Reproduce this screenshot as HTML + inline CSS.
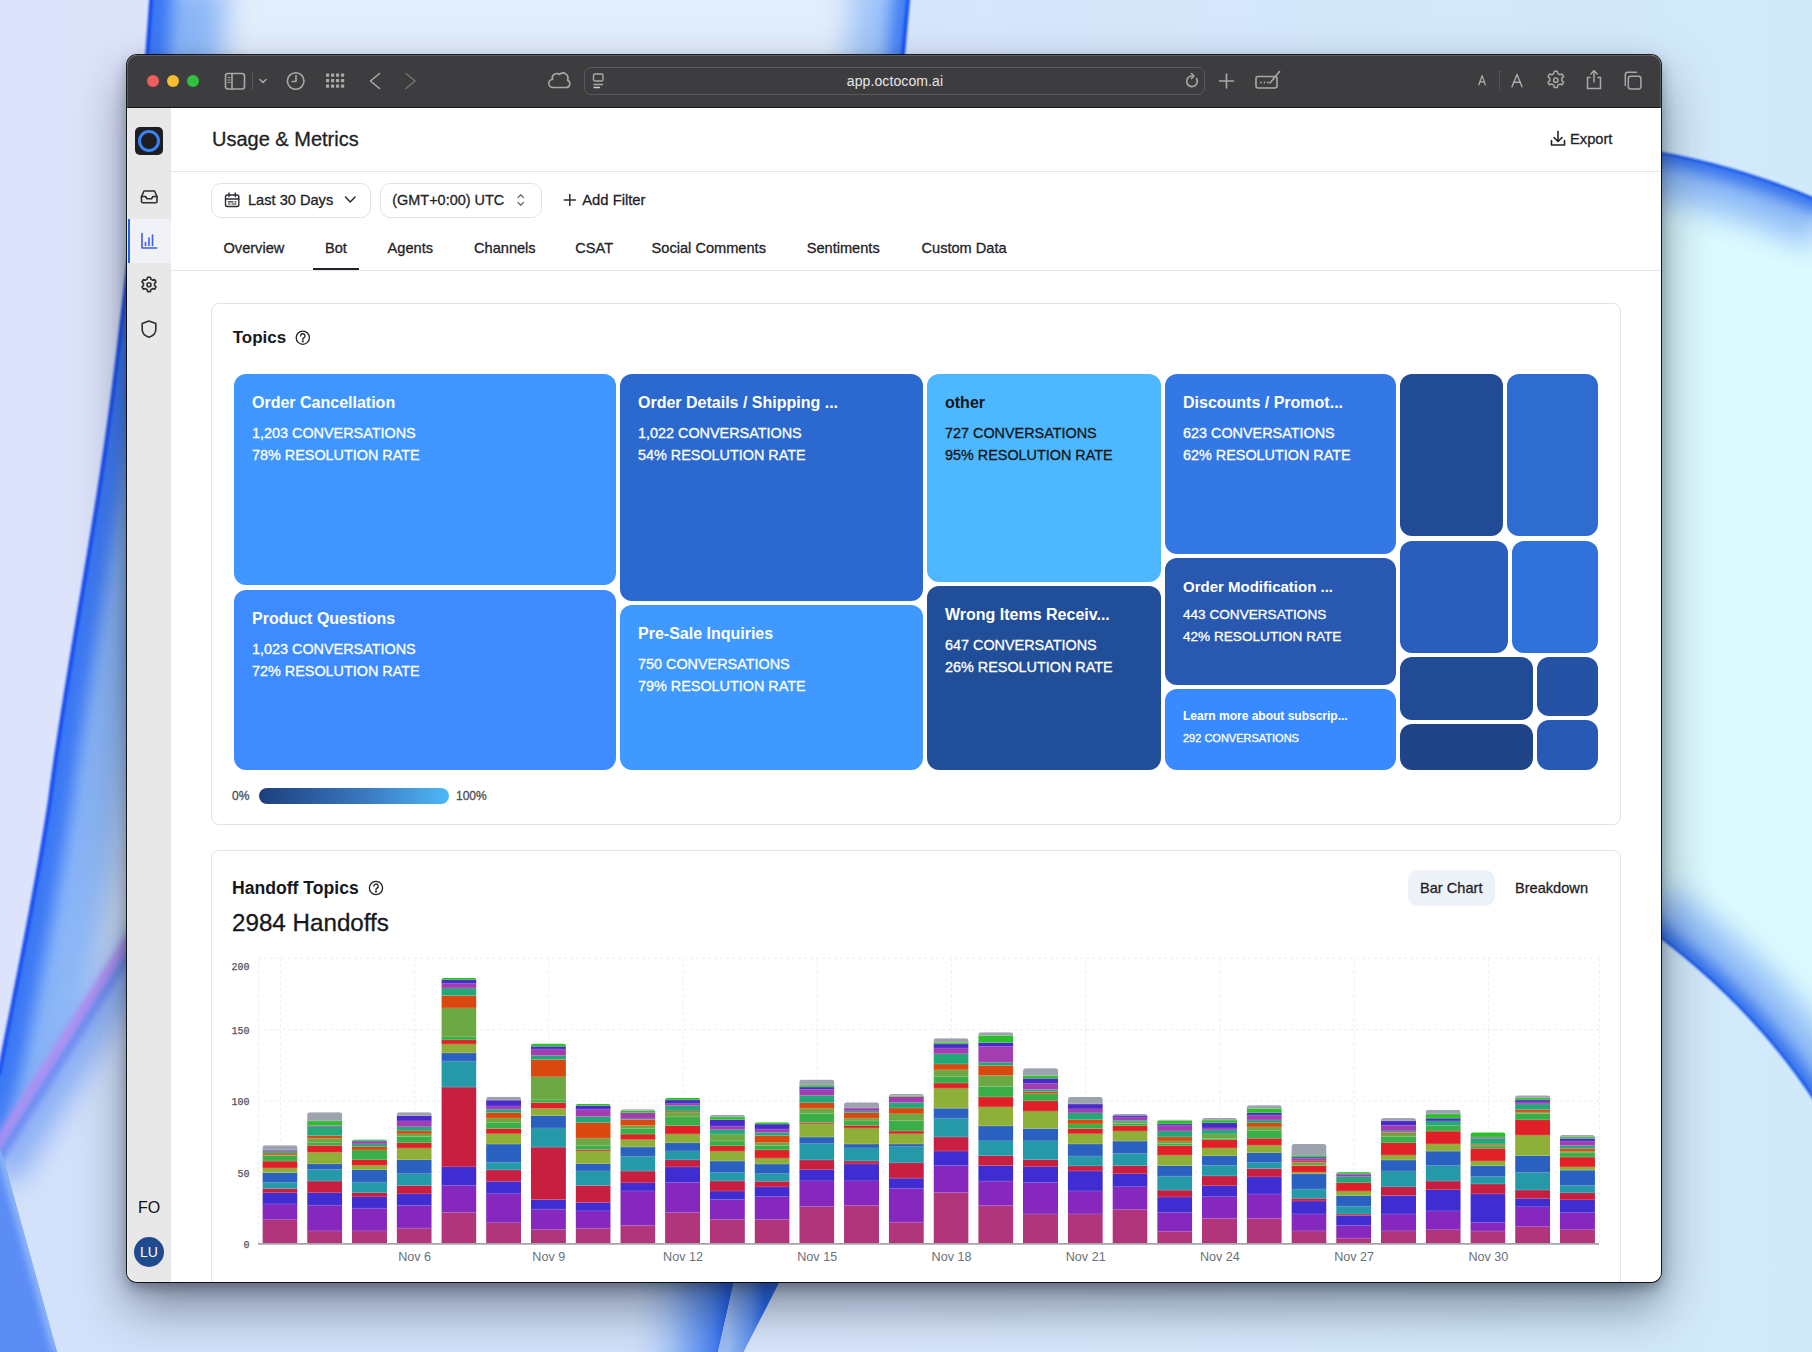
<!DOCTYPE html>
<html><head><meta charset="utf-8">
<style>
*{box-sizing:border-box;margin:0;padding:0}
html,body{width:1812px;height:1352px;overflow:hidden}
body{position:relative;font-family:"Liberation Sans",sans-serif;background:#dde3fa}
.abs{position:absolute}
#wall{position:absolute;left:0;top:0;width:1812px;height:1352px}
#win{position:absolute;left:127px;top:55px;width:1534px;height:1227px;border-radius:10px;overflow:hidden;background:#fff;box-shadow:0 0 0 1px rgba(0,0,0,.85),0 6px 14px rgba(20,25,35,.35),0 24px 50px rgba(30,40,60,.5)}
#tb{position:absolute;left:0;top:0;width:1535px;height:53px;background:#3d3d3f;border-bottom:1px solid #1c1c1c}
#side{position:absolute;left:0;top:53px;width:44px;height:1175px;background:#e8e8e8}
#main{position:absolute;left:44px;top:53px;width:1491px;height:1175px;background:#fff}
.t{position:absolute;white-space:nowrap;color:#1f2328}
.t[style*="font-weight:400"]{-webkit-text-stroke:0.3px currentColor}
</style></head><body>
<svg id="wall" viewBox="0 0 1812 1352" width="1812" height="1352">
<defs>
<linearGradient id="bg" x1="0" y1="0" x2="1" y2="0">
<stop offset="0" stop-color="#dde3fa"/><stop offset="0.5" stop-color="#d8e6fb"/><stop offset="1" stop-color="#d1eafa"/></linearGradient>
<filter id="b1" filterUnits="userSpaceOnUse" x="-200" y="-200" width="2212" height="1752"><feGaussianBlur stdDeviation="1"/></filter>
<filter id="b3" filterUnits="userSpaceOnUse" x="-200" y="-200" width="2212" height="1752"><feGaussianBlur stdDeviation="3"/></filter>
<filter id="b8" filterUnits="userSpaceOnUse" x="-200" y="-200" width="2212" height="1752"><feGaussianBlur stdDeviation="8"/></filter>
<filter id="b15" filterUnits="userSpaceOnUse" x="-200" y="-200" width="2212" height="1752"><feGaussianBlur stdDeviation="15"/></filter>
<clipPath id="r1"><path d="M151,0 C140,170 120,360 97.6,500 C80,610 60,720 50,800 C35,900 15,990 0,1072 L0,1147 L145,915 L145,60 L903,60 L908,0 Z"/></clipPath>
<clipPath id="r3"><path d="M0,1147 L57,1352 L0,1352 Z"/></clipPath>
<clipPath id="r4"><path d="M600,1270 L790,1270 L742,1352 L600,1352 Z"/></clipPath>
<clipPath id="rb1"><path d="M1640,145 Q1730,160 1830,205 L1830,1120 Q1740,990 1640,905 Z"/></clipPath>
</defs>
<rect width="1812" height="1352" fill="url(#bg)"/>
<g clip-path="url(#r1)">
 <rect width="1000" height="1352" fill="#e3eefc"/>
 <path d="M151.5,-20 C140,170 120,360 97.6,500 C80,610 60,720 50,800 C35,900 15,990 -1,1075 L-40,1250" fill="none" stroke="#8ab6f7" stroke-width="150" filter="url(#b15)"/>
 <path d="M151.5,-20 C140,170 120,360 97.6,500 C80,610 60,720 50,800 C35,900 15,990 -1,1075 L-40,1250" fill="none" stroke="#3a78f4" stroke-width="44" filter="url(#b8)"/>
 <path d="M909,-20 L901,80" fill="none" stroke="#9cc2f8" stroke-width="110" filter="url(#b15)"/>
 <path d="M909,-20 L901,80" fill="none" stroke="#3f7ef5" stroke-width="30" filter="url(#b8)"/>
</g>
<path d="M151.5,-5 C140,170 120,360 97.6,500 C80,610 60,720 50,800 C35,900 15,990 -1,1075" fill="none" stroke="#1a4ff2" stroke-width="4" filter="url(#b1)"/>
<path d="M908.5,-5 L902.5,60" fill="none" stroke="#1a55f2" stroke-width="4" filter="url(#b1)"/>
<!-- below purple streak -->
<path d="M145,915 L0,1147 L57,1352 L715,1352 L715,1282 L145,1282 Z" fill="#d3e2fa"/>
<path d="M150,935 L0,1175" fill="none" stroke="#7fa6f4" stroke-width="34" filter="url(#b15)"/>
<path d="M146,925 L-4,1160" fill="none" stroke="#6d8ff2" stroke-width="12" filter="url(#b3)"/>
<path d="M142,918 L-8,1152" fill="none" stroke="#b58cf2" stroke-width="8" filter="url(#b3)"/>
<g clip-path="url(#r3)"><rect width="80" height="1352" fill="#5b8df5"/>
<path d="M0,1147 L57,1352" fill="none" stroke="#8cb6f8" stroke-width="10" filter="url(#b3)"/></g>
<!-- bottom streaks -->
<linearGradient id="gs1" gradientUnits="userSpaceOnUse" x1="620" y1="0" x2="728" y2="0"><stop offset="0" stop-color="#d6e4fa" stop-opacity="0"/><stop offset="0.45" stop-color="#a9c8f7"/><stop offset="0.85" stop-color="#4f86f0"/><stop offset="1" stop-color="#1f5fee"/></linearGradient>
<linearGradient id="gs2" gradientUnits="userSpaceOnUse" x1="728" y1="0" x2="765" y2="0"><stop offset="0" stop-color="#9cbcf2"/><stop offset="0.6" stop-color="#5f93f0"/><stop offset="1" stop-color="#2163ee"/></linearGradient>
<path d="M600,1275 L735.5,1275 L718,1352 L600,1352 Z" fill="url(#gs1)"/>
<path d="M735.5,1275 L783,1275 L743.5,1352 L718,1352 Z" fill="url(#gs2)"/>
<!-- right band -->
<clipPath id="rb2"><path d="M1640,149.5 Q1735,163.5 1830,205.5 L1830,1125 C1775,1030 1700,965 1640,922 Z"/></clipPath>
<g clip-path="url(#rb2)">
 <rect x="1600" y="100" width="240" height="1100" fill="#dcfafe"/>
 <path d="M1640,149.5 Q1735,163.5 1830,205.5" fill="none" stroke="#8dbaf6" stroke-width="90" filter="url(#b15)"/>
 <path d="M1640,149.5 Q1735,163.5 1830,205.5" fill="none" stroke="#2f6dec" stroke-width="22" filter="url(#b8)"/>
 <path d="M1640,922 C1700,965 1775,1030 1830,1125" fill="none" stroke="#8dbaf6" stroke-width="90" filter="url(#b15)"/>
 <path d="M1640,922 C1700,965 1775,1030 1830,1125" fill="none" stroke="#2f6dec" stroke-width="22" filter="url(#b8)"/>
</g>
<path d="M1640,149.5 Q1735,163.5 1830,205.5" fill="none" stroke="#1a58ea" stroke-width="2.5" filter="url(#b1)"/>
<path d="M1640,922 C1700,965 1775,1030 1830,1125" fill="none" stroke="#1a58ea" stroke-width="2.5" filter="url(#b1)"/>
</svg>
<div id="win"><div id="pg" style="position:absolute;left:-127px;top:-55px;width:1812px;height:1352px">
<!-- toolbar -->
<div class="abs" style="left:127px;top:55px;width:1535px;height:52px;background:#3d3d3f"></div>
<div class="abs" style="left:127px;top:107px;width:1535px;height:1px;background:#161616"></div>
<div class="abs" style="left:147px;top:75px;width:12px;height:12px;border-radius:50%;background:#ec5f5d"></div>
<div class="abs" style="left:167px;top:75px;width:12px;height:12px;border-radius:50%;background:#f4be30"></div>
<div class="abs" style="left:187px;top:75px;width:12px;height:12px;border-radius:50%;background:#2fc13f"></div>
<svg class="abs" style="left:215px;top:65px" width="220" height="32" viewBox="215 65 220 32" fill="none" stroke="#a9a9ab" stroke-width="1.6" stroke-linecap="round" stroke-linejoin="round">
 <rect x="225.5" y="73.5" width="19" height="15.5" rx="2.5"/>
 <line x1="232" y1="74" x2="232" y2="89"/>
 <line x1="228" y1="77.5" x2="230" y2="77.5" stroke-width="1.1"/><line x1="228" y1="80" x2="230" y2="80" stroke-width="1.1"/><line x1="228" y1="82.5" x2="230" y2="82.5" stroke-width="1.1"/>
 <line x1="252.5" y1="73" x2="252.5" y2="90" stroke="#5a5a5c" stroke-width="1"/>
 <polyline points="260,79.5 263,82.5 266,79.5"/>
 <circle cx="295.7" cy="81" r="8.3"/>
 <polyline points="296,75.5 296,81.5 292,81.5"/>
 <polyline points="370,73.5 379,81 370,88.5" transform="translate(749.5,0) scale(-1,1)"/>
 <polyline points="406,73.5 415,81 406,88.5" stroke="#717173"/>
</svg>
<svg class="abs" style="left:320px;top:68px" width="30" height="26" viewBox="320 68 30 26" fill="#a9a9ab">
 <rect x="326" y="73.5" width="3.2" height="3.2" rx=".6"/><rect x="331" y="73.5" width="3.2" height="3.2" rx=".6"/><rect x="336" y="73.5" width="3.2" height="3.2" rx=".6"/><rect x="341" y="73.5" width="3.2" height="3.2" rx=".6"/>
 <rect x="326" y="79" width="3.2" height="3.2" rx=".6"/><rect x="331" y="79" width="3.2" height="3.2" rx=".6"/><rect x="336" y="79" width="3.2" height="3.2" rx=".6"/><rect x="341" y="79" width="3.2" height="3.2" rx=".6"/>
 <rect x="326" y="84.5" width="3.2" height="3.2" rx=".6"/><rect x="331" y="84.5" width="3.2" height="3.2" rx=".6"/><rect x="336" y="84.5" width="3.2" height="3.2" rx=".6"/><rect x="341" y="84.5" width="3.2" height="3.2" rx=".6"/>
</svg>
<!-- cloud -->
<svg class="abs" style="left:545px;top:68px" width="28" height="24" viewBox="545 68 28 24" fill="none" stroke="#a9a9ab" stroke-width="1.6" stroke-linejoin="round">
 <path d="M553,87.5 H566 A3.8,3.8 0 0 0 567.5,80.2 A5,5 0 0 0 559.5,74.5 A4.5,4.5 0 0 0 552.5,79.5 A4,4 0 0 0 553,87.5 Z"/>
</svg>
<!-- address bar -->
<div class="abs" style="left:584px;top:67px;width:621px;height:28px;border-radius:7px;border:1px solid #5a5a5c"></div>
<svg class="abs" style="left:590px;top:70px" width="20" height="22" viewBox="590 70 20 22" fill="none" stroke="#a9a9ab" stroke-width="1.4">
 <rect x="593.5" y="74" width="9.5" height="7" rx="1.6"/>
 <line x1="593.5" y1="84.5" x2="603" y2="84.5"/><line x1="593.5" y1="87.5" x2="600" y2="87.5" stroke="#cfcfd1"/>
</svg>
<div class="t" style="left:820px;top:73px;width:150px;text-align:center;font-size:14px;color:#e6e6e8;letter-spacing:0.1px">app.octocom.ai</div>
<svg class="abs" style="left:1180px;top:68px" width="120" height="26" viewBox="1180 68 120 26" fill="none" stroke="#a9a9ab" stroke-width="1.6" stroke-linecap="round">
 <path d="M1196.5,78.5 A5.3,5.3 0 1 1 1192.5,76"/>
 <polyline points="1191.5,73.5 1194,76 1191.5,78.5" stroke-linejoin="round"/>
 <line x1="1226.5" y1="74" x2="1226.5" y2="88"/><line x1="1219.5" y1="81" x2="1233.5" y2="81"/>
 <rect x="1256" y="76.5" width="21" height="11.5" rx="2"/>
 <line x1="1270" y1="83" x2="1279.5" y2="71.5"/>
 <circle cx="1261" cy="82.5" r=".9" fill="#a9a9ab" stroke="none"/><circle cx="1264.5" cy="82.5" r=".9" fill="#a9a9ab" stroke="none"/><circle cx="1268" cy="82.5" r=".9" fill="#a9a9ab" stroke="none"/>
</svg>
<!-- right toolbar -->
<svg class="abs" style="left:1470px;top:68px" width="60" height="24" viewBox="1470 68 60 24" fill="none" stroke="#b0b0b2" stroke-width="1.2" stroke-linecap="round" stroke-linejoin="round">
<polyline points="1478.8,85 1482.1,75.6 1485.4,85"/><line x1="1480" y1="81.8" x2="1484.2" y2="81.8"/>
<polyline points="1512,86.8 1517,74.4 1522,86.8" stroke-width="1.4"/><line x1="1513.9" y1="82.3" x2="1520.1" y2="82.3" stroke-width="1.4"/></svg>
<div class="abs" style="left:1499px;top:71px;width:0;height:19px;border-left:1px dotted #6a6a6c"></div>

<svg class="abs" style="left:1540px;top:65px" width="110" height="32" viewBox="1540 65 110 32" fill="none" stroke="#a9a9ab" stroke-width="1.5" stroke-linejoin="round" stroke-linecap="round">
 <path d="M1554.3,71.3 h3 l.5,2.3 a7,7 0 0 1 2.1,1.2 l2.2,-.8 1.5,2.6 -1.8,1.6 a7,7 0 0 1 0,2.4 l1.8,1.6 -1.5,2.6 -2.2,-.8 a7,7 0 0 1 -2.1,1.2 l-.5,2.3 h-3 l-.5,-2.3 a7,7 0 0 1 -2.1,-1.2 l-2.2,.8 -1.5,-2.6 1.8,-1.6 a7,7 0 0 1 0,-2.4 l-1.8,-1.6 1.5,-2.6 2.2,.8 a7,7 0 0 1 2.1,-1.2 z"/>
 <circle cx="1555.8" cy="80.3" r="2.2"/>
 <path d="M1590,77.5 h-2.5 v11 h13 v-11 h-2.5"/>
 <line x1="1594" y1="71" x2="1594" y2="82"/><polyline points="1590.8,74 1594,70.8 1597.2,74"/>
 <rect x="1628.3" y="76.3" width="12.6" height="12.6" rx="2.4"/>
 <path d="M1625.3,85.5 v-10.8 a2.4,2.4 0 0 1 2.4,-2.4 h8.8" />
</svg>
<!-- sidebar -->
<div class="abs" style="left:127px;top:108px;width:44px;height:1174px;background:#e8e8e8"></div>
<div class="abs" style="left:135px;top:127px;width:28px;height:28px;border-radius:5px;background:#1e1f22"></div>
<div class="abs" style="left:138px;top:130px;width:22px;height:22px;border-radius:50%;border:3px solid #3b82f6"></div>
<div class="abs" style="left:128px;top:219px;width:43px;height:44px;background:#f1f1f8"></div>
<div class="abs" style="left:128px;top:219px;width:2px;height:44px;background:#2563eb"></div>
<svg class="abs" style="left:127px;top:180px" width="44" height="170" viewBox="127 180 44 170" fill="none" stroke="#2b2d31" stroke-width="1.6" stroke-linejoin="round" stroke-linecap="round">
 <path d="M141.5,196.5 L144,191 H154.5 L157,196.5 V201.5 a1.3,1.3 0 0 1 -1.3,1.3 H142.8 a1.3,1.3 0 0 1 -1.3,-1.3 Z"/>
 <path d="M141.5,196.5 H145.5 L147,198.8 H151.5 L153,196.5 H157"/>
 <g stroke="#3b5bf5"><path d="M142,233.5 V248 H156.5"/><line x1="145.5" y1="242.5" x2="145.5" y2="245.5"/><line x1="149" y1="238" x2="149" y2="245.5"/><line x1="152.5" y1="235" x2="152.5" y2="245.5"/></g>
 <path d="M147.6,277.3 h2.8 l.5,2 a6,6 0 0 1 1.8,1 l1.9,-.7 1.4,2.4 -1.5,1.4 a6,6 0 0 1 0,2.1 l1.5,1.4 -1.4,2.4 -1.9,-.7 a6,6 0 0 1 -1.8,1 l-.5,2 h-2.8 l-.5,-2 a6,6 0 0 1 -1.8,-1 l-1.9,.7 -1.4,-2.4 1.5,-1.4 a6,6 0 0 1 0,-2.1 l-1.5,-1.4 1.4,-2.4 1.9,.7 a6,6 0 0 1 1.8,-1 z"/>
 <circle cx="149" cy="284.8" r="2"/>
 <path d="M149,321 L155.8,323.5 V329.5 C155.8,333.5 152.5,336 149,337.2 C145.5,336 142.2,333.5 142.2,329.5 V323.5 Z"/>
</svg>
<div class="t" style="left:138px;top:1199px;font-size:16px;color:#111">FO</div>
<div class="abs" style="left:134px;top:1237px;width:30px;height:30px;border-radius:50%;background:#1f4a8e;color:#fff;font-size:14px;line-height:30px;text-align:center">LU</div>
<!-- main -->
<div class="abs" style="left:171px;top:108px;width:1491px;height:1174px;background:#fff"></div>
<div class="t" style="left:212px;top:129.07px;font-size:20px;line-height:20px;font-weight:400;color:#1d1f23;">Usage &amp; Metrics</div>
<svg class="abs" style="left:1548px;top:128px" width="20" height="22" viewBox="1548 128 20 22" fill="none" stroke="#1f2328" stroke-width="1.6" stroke-linecap="round" stroke-linejoin="round">
<path d="M1551.5,140.5 v4.5 h13 v-4.5"/><line x1="1558" y1="131.5" x2="1558" y2="141"/><polyline points="1554,137.5 1558,141.5 1562,137.5"/></svg>
<div class="t" style="left:1570px;top:132.06px;font-size:14.7px;line-height:14.7px;font-weight:400;color:#1f2328;">Export</div>
<div class="abs" style="left:171px;top:171px;width:1491px;height:1px;background:#e6e7ea"></div>
<div class="abs" style="left:211px;top:182.5px;width:159.5px;height:35px;border:1px solid #e2e3e8;border-radius:10px"></div>
<svg class="abs" style="left:222px;top:190px" width="20" height="20" viewBox="222 190 20 20" fill="none" stroke="#2a2c30" stroke-width="1.4" stroke-linecap="round">
<rect x="225.5" y="195" width="13.3" height="11.5" rx="1.8"/><line x1="229" y1="193" x2="229" y2="196.5"/><line x1="235.3" y1="193" x2="235.3" y2="196.5"/><line x1="225.5" y1="199" x2="238.8" y2="199"/>
<line x1="228.3" y1="201.8" x2="233" y2="201.8" stroke-width="1.2"/><line x1="235" y1="201.8" x2="236" y2="201.8" stroke-width="1.2"/><line x1="228.3" y1="204" x2="230" y2="204" stroke-width="1.2"/><line x1="232" y1="204" x2="236" y2="204" stroke-width="1.2"/></svg>
<div class="t" style="left:248px;top:192.94px;font-size:14.6px;line-height:14.6px;font-weight:400;color:#1f2328;">Last 30 Days</div>
<svg class="abs" style="left:340px;top:190px" width="20" height="20" viewBox="340 190 20 20" fill="none" stroke="#2a2c30" stroke-width="1.5" stroke-linecap="round" stroke-linejoin="round"><polyline points="345.5,197 350.2,202 355,197"/></svg>
<div class="abs" style="left:379.5px;top:182.5px;width:162px;height:35px;border:1px solid #e2e3e8;border-radius:10px"></div>
<div class="t" style="left:392.3px;top:193.07px;font-size:14.45px;line-height:14.45px;font-weight:400;color:#1f2328;">(GMT+0:00) UTC</div>
<svg class="abs" style="left:512px;top:190px" width="16" height="20" viewBox="512 190 16 20" fill="none" stroke="#6b6e75" stroke-width="1.3" stroke-linecap="round" stroke-linejoin="round"><polyline points="518,197.5 520.7,194.8 523.4,197.5"/><polyline points="518,202.5 520.7,205.2 523.4,202.5"/></svg>
<svg class="abs" style="left:560px;top:190px" width="20" height="20" viewBox="560 190 20 20" fill="none" stroke="#2a2c30" stroke-width="1.5" stroke-linecap="round"><line x1="569.8" y1="194.5" x2="569.8" y2="205.5"/><line x1="564.3" y1="200" x2="575.3" y2="200"/></svg>
<div class="t" style="left:582.2px;top:192.77px;font-size:14.8px;line-height:14.8px;font-weight:400;color:#1f2328;">Add Filter</div>
<div class="t" style="left:223.5px;top:240.94px;font-size:14.6px;line-height:14.6px;font-weight:400;color:#1f2328;">Overview</div>
<div class="t" style="left:325px;top:240.94px;font-size:14.6px;line-height:14.6px;font-weight:400;color:#1f2328;">Bot</div>
<div class="t" style="left:387.6px;top:240.94px;font-size:14.6px;line-height:14.6px;font-weight:400;color:#1f2328;">Agents</div>
<div class="t" style="left:474px;top:240.94px;font-size:14.6px;line-height:14.6px;font-weight:400;color:#1f2328;">Channels</div>
<div class="t" style="left:575.3px;top:240.94px;font-size:14.6px;line-height:14.6px;font-weight:400;color:#1f2328;">CSAT</div>
<div class="t" style="left:651.6px;top:240.94px;font-size:14.6px;line-height:14.6px;font-weight:400;color:#1f2328;">Social Comments</div>
<div class="t" style="left:806.7px;top:240.94px;font-size:14.6px;line-height:14.6px;font-weight:400;color:#1f2328;">Sentiments</div>
<div class="t" style="left:921.5px;top:240.94px;font-size:14.6px;line-height:14.6px;font-weight:400;color:#1f2328;">Custom Data</div>
<div class="abs" style="left:171px;top:270px;width:1491px;height:1px;background:#e6e7ea"></div>
<div class="abs" style="left:313px;top:267.5px;width:46px;height:2.5px;background:#1f2328"></div>
<div class="abs" style="left:211px;top:303px;width:1410px;height:522px;border:1px solid #e2e3e8;border-radius:8px"></div>
<div class="t" style="left:232.7px;top:329.31px;font-size:17px;line-height:17px;font-weight:700;color:#16181c;">Topics</div>
<svg class="abs" style="left:293px;top:328px" width="20" height="20" viewBox="293 328 20 20" fill="none" stroke="#1f2328" stroke-width="1.3" stroke-linecap="round"><circle cx="302.8" cy="337.7" r="6.6"/><path d="M300.6,335.9 a2.2,2.2 0 1 1 3.2,2 c-.7,.35 -1,.8 -1,1.5"/><circle cx="302.8" cy="341.3" r=".45" fill="#1f2328"/></svg>
<div class="abs" style="left:234px;top:374px;width:382px;height:211px;background:#4096ff;border-radius:12px"></div>
<div class="t" style="left:252px;top:395.26px;font-size:16px;line-height:16px;font-weight:700;color:#fff;">Order Cancellation</div>
<div class="t" style="left:252px;top:426.11px;font-size:14.4px;line-height:14.4px;font-weight:400;color:#fff;">1,203 CONVERSATIONS</div>
<div class="t" style="left:252px;top:448.01px;font-size:14.4px;line-height:14.4px;font-weight:400;color:#fff;">78% RESOLUTION RATE</div>
<div class="abs" style="left:234px;top:590px;width:382px;height:179.5px;background:#3d8bff;border-radius:12px"></div>
<div class="t" style="left:252px;top:611.26px;font-size:16px;line-height:16px;font-weight:700;color:#fff;">Product Questions</div>
<div class="t" style="left:252px;top:642.11px;font-size:14.4px;line-height:14.4px;font-weight:400;color:#fff;">1,023 CONVERSATIONS</div>
<div class="t" style="left:252px;top:664.01px;font-size:14.4px;line-height:14.4px;font-weight:400;color:#fff;">72% RESOLUTION RATE</div>
<div class="abs" style="left:620px;top:374px;width:303px;height:226.5px;background:#2b69cf;border-radius:12px"></div>
<div class="t" style="left:638px;top:395.26px;font-size:16px;line-height:16px;font-weight:700;color:#fff;">Order Details / Shipping ...</div>
<div class="t" style="left:638px;top:426.11px;font-size:14.4px;line-height:14.4px;font-weight:400;color:#fff;">1,022 CONVERSATIONS</div>
<div class="t" style="left:638px;top:448.01px;font-size:14.4px;line-height:14.4px;font-weight:400;color:#fff;">54% RESOLUTION RATE</div>
<div class="abs" style="left:620px;top:605px;width:303px;height:164.5px;background:#3f99ff;border-radius:12px"></div>
<div class="t" style="left:638px;top:626.26px;font-size:16px;line-height:16px;font-weight:700;color:#fff;">Pre-Sale Inquiries</div>
<div class="t" style="left:638px;top:657.11px;font-size:14.4px;line-height:14.4px;font-weight:400;color:#fff;">750 CONVERSATIONS</div>
<div class="t" style="left:638px;top:679.01px;font-size:14.4px;line-height:14.4px;font-weight:400;color:#fff;">79% RESOLUTION RATE</div>
<div class="abs" style="left:927px;top:374px;width:233.5px;height:207.5px;background:#4db8ff;border-radius:12px"></div>
<div class="t" style="left:945px;top:395.26px;font-size:16px;line-height:16px;font-weight:700;color:#151515;">other</div>
<div class="t" style="left:945px;top:426.11px;font-size:14.4px;line-height:14.4px;font-weight:400;color:#151515;">727 CONVERSATIONS</div>
<div class="t" style="left:945px;top:448.01px;font-size:14.4px;line-height:14.4px;font-weight:400;color:#151515;">95% RESOLUTION RATE</div>
<div class="abs" style="left:927px;top:586px;width:233.5px;height:183.5px;background:#214e98;border-radius:12px"></div>
<div class="t" style="left:945px;top:607.26px;font-size:16px;line-height:16px;font-weight:700;color:#fff;">Wrong Items Receiv...</div>
<div class="t" style="left:945px;top:638.11px;font-size:14.4px;line-height:14.4px;font-weight:400;color:#fff;">647 CONVERSATIONS</div>
<div class="t" style="left:945px;top:660.01px;font-size:14.4px;line-height:14.4px;font-weight:400;color:#fff;">26% RESOLUTION RATE</div>
<div class="abs" style="left:1165px;top:374px;width:231px;height:180px;background:#3478e5;border-radius:12px"></div>
<div class="t" style="left:1183px;top:395.26px;font-size:16px;line-height:16px;font-weight:700;color:#fff;">Discounts / Promot...</div>
<div class="t" style="left:1183px;top:426.11px;font-size:14.4px;line-height:14.4px;font-weight:400;color:#fff;">623 CONVERSATIONS</div>
<div class="t" style="left:1183px;top:448.01px;font-size:14.4px;line-height:14.4px;font-weight:400;color:#fff;">62% RESOLUTION RATE</div>
<div class="abs" style="left:1165px;top:558px;width:231px;height:127px;background:#2858b0;border-radius:12px"></div>
<div class="t" style="left:1183px;top:578.60px;font-size:15px;line-height:15px;font-weight:700;color:#fff;">Order Modification ...</div>
<div class="t" style="left:1183px;top:607.69px;font-size:13.6px;line-height:13.6px;font-weight:400;color:#fff;">443 CONVERSATIONS</div>
<div class="t" style="left:1183px;top:629.69px;font-size:13.6px;line-height:13.6px;font-weight:400;color:#fff;">42% RESOLUTION RATE</div>
<div class="abs" style="left:1165px;top:689px;width:231px;height:80.5px;background:#3a8aff;border-radius:12px"></div>
<div class="t" style="left:1183px;top:709.84px;font-size:12px;line-height:12px;font-weight:700;color:#fff;">Learn more about subscrip...</div>
<div class="t" style="left:1183px;top:733.29px;font-size:11px;line-height:11px;font-weight:400;color:#fff;">292 CONVERSATIONS</div>
<div class="abs" style="left:1400px;top:374px;width:103px;height:162px;background:#214c95;border-radius:12px"></div>
<div class="abs" style="left:1507px;top:374px;width:91px;height:162px;background:#2e6cd0;border-radius:12px"></div>
<div class="abs" style="left:1400px;top:541px;width:108px;height:111.5px;background:#2a5ebd;border-radius:12px"></div>
<div class="abs" style="left:1512px;top:541px;width:86px;height:111.5px;background:#2f72d9;border-radius:12px"></div>
<div class="abs" style="left:1400px;top:657px;width:133px;height:62.5px;background:#214c95;border-radius:12px"></div>
<div class="abs" style="left:1537px;top:657px;width:61px;height:58.5px;background:#2552a5;border-radius:12px"></div>
<div class="abs" style="left:1400px;top:724px;width:133px;height:45.5px;background:#1f4488;border-radius:12px"></div>
<div class="abs" style="left:1537px;top:720px;width:61px;height:49.5px;background:#2859b5;border-radius:12px"></div>
<div class="t" style="left:232px;top:789.84px;font-size:12px;line-height:12px;font-weight:400;color:#4a4d55;">0%</div>
<div class="abs" style="left:259px;top:787.5px;width:189.5px;height:16px;border-radius:8px;background:linear-gradient(90deg,#1d3f7c,#3a78c0 55%,#4db8f7)"></div>
<div class="t" style="left:456px;top:789.84px;font-size:12px;line-height:12px;font-weight:400;color:#4a4d55;">100%</div>
<div class="abs" style="left:211px;top:849.5px;width:1410px;height:520px;border:1px solid #e2e3e8;border-radius:8px"></div>
<div class="t" style="left:232px;top:879.90px;font-size:17.6px;line-height:17.6px;font-weight:700;color:#16181c;">Handoff Topics</div>
<svg class="abs" style="left:366px;top:878px" width="20" height="20" viewBox="366 878 20 20" fill="none" stroke="#1f2328" stroke-width="1.3" stroke-linecap="round"><circle cx="376" cy="888" r="6.6"/><path d="M373.8,886.2 a2.2,2.2 0 1 1 3.2,2 c-.7,.35 -1,.8 -1,1.5"/><circle cx="376" cy="891.6" r=".45" fill="#1f2328"/></svg>
<div class="t" style="left:232px;top:911.11px;font-size:24.2px;line-height:24.2px;font-weight:400;color:#16181c;">2984 Handoffs</div>
<div class="abs" style="left:1408px;top:870px;width:87px;height:36px;border-radius:10px;background:#edf1f8"></div>
<div class="t" style="left:1420px;top:881.24px;font-size:14.6px;line-height:14.6px;font-weight:400;color:#1f2328;">Bar Chart</div>
<div class="t" style="left:1515px;top:881.24px;font-size:14.6px;line-height:14.6px;font-weight:400;color:#1f2328;">Breakdown</div>
<!--CHART--><svg class="abs" style="left:0;top:0" width="1812" height="1352" viewBox="0 0 1812 1352">
<g stroke="#eceef5" stroke-width="1" stroke-dasharray="3 3" fill="none"><line x1="258" y1="1172.3" x2="1599" y2="1172.3"/><line x1="258" y1="1101.0" x2="1599" y2="1101.0"/><line x1="258" y1="1029.6" x2="1599" y2="1029.6"/><line x1="258" y1="958.2" x2="1599" y2="958.2"/><line x1="258.5" y1="958.3" x2="258.5" y2="1243.7"/><line x1="280.4" y1="958.3" x2="280.4" y2="1243.7"/><line x1="414.6" y1="958.3" x2="414.6" y2="1243.7"/><line x1="548.8" y1="958.3" x2="548.8" y2="1243.7"/><line x1="683.0" y1="958.3" x2="683.0" y2="1243.7"/><line x1="817.2" y1="958.3" x2="817.2" y2="1243.7"/><line x1="951.5" y1="958.3" x2="951.5" y2="1243.7"/><line x1="1085.7" y1="958.3" x2="1085.7" y2="1243.7"/><line x1="1219.9" y1="958.3" x2="1219.9" y2="1243.7"/><line x1="1354.1" y1="958.3" x2="1354.1" y2="1243.7"/><line x1="1488.4" y1="958.3" x2="1488.4" y2="1243.7"/><line x1="1599.5" y1="958.3" x2="1599.5" y2="1243.7"/></g>
<defs><clipPath id="cb0"><path d="M262.40,1243.70 V1148.27 Q262.40,1145.27 265.40,1145.27 H294.50 Q297.50,1145.27 297.50,1148.27 V1243.70 Z"/></clipPath><clipPath id="cb1"><path d="M307.14,1243.70 V1115.20 Q307.14,1112.20 310.14,1112.20 H339.24 Q342.24,1112.20 342.24,1115.20 V1243.70 Z"/></clipPath><clipPath id="cb2"><path d="M351.88,1243.70 V1142.39 Q351.88,1139.39 354.88,1139.39 H383.98 Q386.98,1139.39 386.98,1142.39 V1243.70 Z"/></clipPath><clipPath id="cb3"><path d="M396.62,1243.70 V1115.20 Q396.62,1112.20 399.62,1112.20 H428.72 Q431.72,1112.20 431.72,1115.20 V1243.70 Z"/></clipPath><clipPath id="cb4"><path d="M441.36,1243.70 V980.87 Q441.36,977.87 444.36,977.87 H473.46 Q476.46,977.87 476.46,980.87 V1243.70 Z"/></clipPath><clipPath id="cb5"><path d="M486.10,1243.70 V1099.73 Q486.10,1096.73 489.10,1096.73 H518.20 Q521.20,1096.73 521.20,1099.73 V1243.70 Z"/></clipPath><clipPath id="cb6"><path d="M530.84,1243.70 V1046.51 Q530.84,1043.51 533.84,1043.51 H562.94 Q565.94,1043.51 565.94,1046.51 V1243.70 Z"/></clipPath><clipPath id="cb7"><path d="M575.58,1243.70 V1106.78 Q575.58,1103.78 578.58,1103.78 H607.68 Q610.68,1103.78 610.68,1106.78 V1243.70 Z"/></clipPath><clipPath id="cb8"><path d="M620.32,1243.70 V1112.17 Q620.32,1109.17 623.32,1109.17 H652.42 Q655.42,1109.17 655.42,1112.17 V1243.70 Z"/></clipPath><clipPath id="cb9"><path d="M665.06,1243.70 V1100.78 Q665.06,1097.78 668.06,1097.78 H697.16 Q700.16,1097.78 700.16,1100.78 V1243.70 Z"/></clipPath><clipPath id="cb10"><path d="M709.80,1243.70 V1117.79 Q709.80,1114.79 712.80,1114.79 H741.90 Q744.90,1114.79 744.90,1117.79 V1243.70 Z"/></clipPath><clipPath id="cb11"><path d="M754.54,1243.70 V1125.19 Q754.54,1122.19 757.54,1122.19 H786.64 Q789.64,1122.19 789.64,1125.19 V1243.70 Z"/></clipPath><clipPath id="cb12"><path d="M799.28,1243.70 V1082.59 Q799.28,1079.59 802.28,1079.59 H831.38 Q834.38,1079.59 834.38,1082.59 V1243.70 Z"/></clipPath><clipPath id="cb13"><path d="M844.02,1243.70 V1105.35 Q844.02,1102.35 847.02,1102.35 H876.12 Q879.12,1102.35 879.12,1105.35 V1243.70 Z"/></clipPath><clipPath id="cb14"><path d="M888.76,1243.70 V1096.96 Q888.76,1093.96 891.76,1093.96 H920.86 Q923.86,1093.96 923.86,1096.96 V1243.70 Z"/></clipPath><clipPath id="cb15"><path d="M933.50,1243.70 V1041.20 Q933.50,1038.20 936.50,1038.20 H965.60 Q968.60,1038.20 968.60,1041.20 V1243.70 Z"/></clipPath><clipPath id="cb16"><path d="M978.24,1243.70 V1035.25 Q978.24,1032.25 981.24,1032.25 H1010.34 Q1013.34,1032.25 1013.34,1035.25 V1243.70 Z"/></clipPath><clipPath id="cb17"><path d="M1022.98,1243.70 V1071.15 Q1022.98,1068.15 1025.98,1068.15 H1055.08 Q1058.08,1068.15 1058.08,1071.15 V1243.70 Z"/></clipPath><clipPath id="cb18"><path d="M1067.72,1243.70 V1099.90 Q1067.72,1096.90 1070.72,1096.90 H1099.82 Q1102.82,1096.90 1102.82,1099.90 V1243.70 Z"/></clipPath><clipPath id="cb19"><path d="M1112.46,1243.70 V1116.95 Q1112.46,1113.95 1115.46,1113.95 H1144.56 Q1147.56,1113.95 1147.56,1116.95 V1243.70 Z"/></clipPath><clipPath id="cb20"><path d="M1157.20,1243.70 V1122.61 Q1157.20,1119.61 1160.20,1119.61 H1189.30 Q1192.30,1119.61 1192.30,1122.61 V1243.70 Z"/></clipPath><clipPath id="cb21"><path d="M1201.94,1243.70 V1120.97 Q1201.94,1117.97 1204.94,1117.97 H1234.04 Q1237.04,1117.97 1237.04,1120.97 V1243.70 Z"/></clipPath><clipPath id="cb22"><path d="M1246.68,1243.70 V1108.15 Q1246.68,1105.15 1249.68,1105.15 H1278.78 Q1281.78,1105.15 1281.78,1108.15 V1243.70 Z"/></clipPath><clipPath id="cb23"><path d="M1291.42,1243.70 V1147.05 Q1291.42,1144.05 1294.42,1144.05 H1323.52 Q1326.52,1144.05 1326.52,1147.05 V1243.70 Z"/></clipPath><clipPath id="cb24"><path d="M1336.16,1243.70 V1175.12 Q1336.16,1172.12 1339.16,1172.12 H1368.26 Q1371.26,1172.12 1371.26,1175.12 V1243.70 Z"/></clipPath><clipPath id="cb25"><path d="M1380.90,1243.70 V1121.08 Q1380.90,1118.08 1383.90,1118.08 H1413.00 Q1416.00,1118.08 1416.00,1121.08 V1243.70 Z"/></clipPath><clipPath id="cb26"><path d="M1425.64,1243.70 V1112.76 Q1425.64,1109.76 1428.64,1109.76 H1457.74 Q1460.74,1109.76 1460.74,1112.76 V1243.70 Z"/></clipPath><clipPath id="cb27"><path d="M1470.38,1243.70 V1135.35 Q1470.38,1132.35 1473.38,1132.35 H1502.48 Q1505.48,1132.35 1505.48,1135.35 V1243.70 Z"/></clipPath><clipPath id="cb28"><path d="M1515.12,1243.70 V1098.37 Q1515.12,1095.37 1518.12,1095.37 H1547.22 Q1550.22,1095.37 1550.22,1098.37 V1243.70 Z"/></clipPath><clipPath id="cb29"><path d="M1559.86,1243.70 V1138.04 Q1559.86,1135.04 1562.86,1135.04 H1591.96 Q1594.96,1135.04 1594.96,1138.04 V1243.70 Z"/></clipPath></defs>
<g clip-path="url(#cb0)"><rect x="262.40" y="1219.61" width="35.1" height="24.39" fill="#b0357a"/><rect x="262.40" y="1203.96" width="35.1" height="15.94" fill="#8628be"/><rect x="262.40" y="1192.64" width="35.1" height="11.62" fill="#3f2dd2"/><rect x="262.40" y="1188.43" width="35.1" height="4.52" fill="#c81e40"/><rect x="262.40" y="1182.33" width="35.1" height="6.40" fill="#2599a8"/><rect x="262.40" y="1172.67" width="35.1" height="9.95" fill="#2a60bf"/><rect x="262.40" y="1167.90" width="35.1" height="5.07" fill="#8fb038"/><rect x="262.40" y="1161.02" width="35.1" height="7.18" fill="#e01f26"/><rect x="262.40" y="1155.48" width="35.1" height="5.85" fill="#3aae48"/><rect x="262.40" y="1154.92" width="35.1" height="0.85" fill="#6ca844"/><rect x="262.40" y="1153.03" width="35.1" height="2.19" fill="#d9480f"/><rect x="262.40" y="1151.04" width="35.1" height="2.30" fill="#25a878"/><rect x="262.40" y="1149.93" width="35.1" height="1.41" fill="#a33db0"/><rect x="262.40" y="1145.27" width="35.1" height="4.96" fill="#9ca2ae"/><rect x="262.40" y="1219.26" width="35.1" height="0.7" fill="#fff" opacity=".28"/><rect x="262.40" y="1203.61" width="35.1" height="0.7" fill="#fff" opacity=".28"/><rect x="262.40" y="1192.29" width="35.1" height="0.7" fill="#fff" opacity=".28"/><rect x="262.40" y="1188.08" width="35.1" height="0.7" fill="#fff" opacity=".28"/><rect x="262.40" y="1181.98" width="35.1" height="0.7" fill="#fff" opacity=".28"/><rect x="262.40" y="1172.32" width="35.1" height="0.7" fill="#fff" opacity=".28"/><rect x="262.40" y="1167.55" width="35.1" height="0.7" fill="#fff" opacity=".28"/><rect x="262.40" y="1160.67" width="35.1" height="0.7" fill="#fff" opacity=".28"/><rect x="262.40" y="1155.13" width="35.1" height="0.7" fill="#fff" opacity=".28"/><rect x="262.40" y="1154.57" width="35.1" height="0.7" fill="#fff" opacity=".28"/><rect x="262.40" y="1152.68" width="35.1" height="0.7" fill="#fff" opacity=".28"/><rect x="262.40" y="1150.69" width="35.1" height="0.7" fill="#fff" opacity=".28"/><rect x="262.40" y="1149.58" width="35.1" height="0.7" fill="#fff" opacity=".28"/></g><g clip-path="url(#cb1)"><rect x="307.14" y="1230.92" width="35.1" height="13.08" fill="#b0357a"/><rect x="307.14" y="1205.18" width="35.1" height="26.04" fill="#8628be"/><rect x="307.14" y="1192.64" width="35.1" height="12.84" fill="#3f2dd2"/><rect x="307.14" y="1180.99" width="35.1" height="11.95" fill="#c81e40"/><rect x="307.14" y="1169.34" width="35.1" height="11.95" fill="#2599a8"/><rect x="307.14" y="1163.80" width="35.1" height="5.85" fill="#2a60bf"/><rect x="307.14" y="1152.15" width="35.1" height="11.95" fill="#8fb038"/><rect x="307.14" y="1145.27" width="35.1" height="7.18" fill="#e01f26"/><rect x="307.14" y="1142.72" width="35.1" height="2.85" fill="#3aae48"/><rect x="307.14" y="1138.28" width="35.1" height="4.74" fill="#6ca844"/><rect x="307.14" y="1135.50" width="35.1" height="3.07" fill="#d9480f"/><rect x="307.14" y="1126.63" width="35.1" height="9.18" fill="#25a878"/><rect x="307.14" y="1125.30" width="35.1" height="1.63" fill="#a33db0"/><rect x="307.14" y="1120.86" width="35.1" height="4.74" fill="#2bc02b"/><rect x="307.14" y="1112.20" width="35.1" height="8.95" fill="#9ca2ae"/><rect x="307.14" y="1230.57" width="35.1" height="0.7" fill="#fff" opacity=".28"/><rect x="307.14" y="1204.83" width="35.1" height="0.7" fill="#fff" opacity=".28"/><rect x="307.14" y="1192.29" width="35.1" height="0.7" fill="#fff" opacity=".28"/><rect x="307.14" y="1180.64" width="35.1" height="0.7" fill="#fff" opacity=".28"/><rect x="307.14" y="1168.99" width="35.1" height="0.7" fill="#fff" opacity=".28"/><rect x="307.14" y="1163.45" width="35.1" height="0.7" fill="#fff" opacity=".28"/><rect x="307.14" y="1151.80" width="35.1" height="0.7" fill="#fff" opacity=".28"/><rect x="307.14" y="1144.92" width="35.1" height="0.7" fill="#fff" opacity=".28"/><rect x="307.14" y="1142.37" width="35.1" height="0.7" fill="#fff" opacity=".28"/><rect x="307.14" y="1137.93" width="35.1" height="0.7" fill="#fff" opacity=".28"/><rect x="307.14" y="1135.15" width="35.1" height="0.7" fill="#fff" opacity=".28"/><rect x="307.14" y="1126.28" width="35.1" height="0.7" fill="#fff" opacity=".28"/><rect x="307.14" y="1124.95" width="35.1" height="0.7" fill="#fff" opacity=".28"/><rect x="307.14" y="1120.51" width="35.1" height="0.7" fill="#fff" opacity=".28"/></g><g clip-path="url(#cb2)"><rect x="351.88" y="1230.92" width="35.1" height="13.08" fill="#b0357a"/><rect x="351.88" y="1208.18" width="35.1" height="23.04" fill="#8628be"/><rect x="351.88" y="1196.75" width="35.1" height="11.73" fill="#3f2dd2"/><rect x="351.88" y="1192.64" width="35.1" height="4.41" fill="#c81e40"/><rect x="351.88" y="1182.10" width="35.1" height="10.84" fill="#2599a8"/><rect x="351.88" y="1169.68" width="35.1" height="12.73" fill="#2a60bf"/><rect x="351.88" y="1165.24" width="35.1" height="4.74" fill="#8fb038"/><rect x="351.88" y="1159.69" width="35.1" height="5.85" fill="#e01f26"/><rect x="351.88" y="1149.93" width="35.1" height="10.06" fill="#3aae48"/><rect x="351.88" y="1146.60" width="35.1" height="3.63" fill="#d9480f"/><rect x="351.88" y="1143.83" width="35.1" height="3.07" fill="#25a878"/><rect x="351.88" y="1141.61" width="35.1" height="2.52" fill="#a33db0"/><rect x="351.88" y="1140.83" width="35.1" height="1.08" fill="#4b2acc"/><rect x="351.88" y="1139.39" width="35.1" height="1.74" fill="#2bc02b"/><rect x="351.88" y="1230.57" width="35.1" height="0.7" fill="#fff" opacity=".28"/><rect x="351.88" y="1207.83" width="35.1" height="0.7" fill="#fff" opacity=".28"/><rect x="351.88" y="1196.40" width="35.1" height="0.7" fill="#fff" opacity=".28"/><rect x="351.88" y="1192.29" width="35.1" height="0.7" fill="#fff" opacity=".28"/><rect x="351.88" y="1181.75" width="35.1" height="0.7" fill="#fff" opacity=".28"/><rect x="351.88" y="1169.33" width="35.1" height="0.7" fill="#fff" opacity=".28"/><rect x="351.88" y="1164.89" width="35.1" height="0.7" fill="#fff" opacity=".28"/><rect x="351.88" y="1159.34" width="35.1" height="0.7" fill="#fff" opacity=".28"/><rect x="351.88" y="1149.58" width="35.1" height="0.7" fill="#fff" opacity=".28"/><rect x="351.88" y="1146.25" width="35.1" height="0.7" fill="#fff" opacity=".28"/><rect x="351.88" y="1143.48" width="35.1" height="0.7" fill="#fff" opacity=".28"/><rect x="351.88" y="1141.26" width="35.1" height="0.7" fill="#fff" opacity=".28"/><rect x="351.88" y="1140.48" width="35.1" height="0.7" fill="#fff" opacity=".28"/></g><g clip-path="url(#cb3)"><rect x="396.62" y="1228.15" width="35.1" height="15.85" fill="#b0357a"/><rect x="396.62" y="1205.40" width="35.1" height="23.04" fill="#8628be"/><rect x="396.62" y="1193.75" width="35.1" height="11.95" fill="#3f2dd2"/><rect x="396.62" y="1185.43" width="35.1" height="8.62" fill="#c81e40"/><rect x="396.62" y="1173.56" width="35.1" height="12.17" fill="#2599a8"/><rect x="396.62" y="1159.69" width="35.1" height="14.17" fill="#2a60bf"/><rect x="396.62" y="1147.93" width="35.1" height="12.06" fill="#8fb038"/><rect x="396.62" y="1142.72" width="35.1" height="5.51" fill="#e01f26"/><rect x="396.62" y="1136.39" width="35.1" height="6.62" fill="#3aae48"/><rect x="396.62" y="1133.84" width="35.1" height="2.85" fill="#6ca844"/><rect x="396.62" y="1130.84" width="35.1" height="3.30" fill="#d9480f"/><rect x="396.62" y="1126.63" width="35.1" height="4.52" fill="#25a878"/><rect x="396.62" y="1120.86" width="35.1" height="6.07" fill="#a33db0"/><rect x="396.62" y="1115.53" width="35.1" height="5.63" fill="#4b2acc"/><rect x="396.62" y="1112.20" width="35.1" height="3.63" fill="#9ca2ae"/><rect x="396.62" y="1227.80" width="35.1" height="0.7" fill="#fff" opacity=".28"/><rect x="396.62" y="1205.05" width="35.1" height="0.7" fill="#fff" opacity=".28"/><rect x="396.62" y="1193.40" width="35.1" height="0.7" fill="#fff" opacity=".28"/><rect x="396.62" y="1185.08" width="35.1" height="0.7" fill="#fff" opacity=".28"/><rect x="396.62" y="1173.21" width="35.1" height="0.7" fill="#fff" opacity=".28"/><rect x="396.62" y="1159.34" width="35.1" height="0.7" fill="#fff" opacity=".28"/><rect x="396.62" y="1147.58" width="35.1" height="0.7" fill="#fff" opacity=".28"/><rect x="396.62" y="1142.37" width="35.1" height="0.7" fill="#fff" opacity=".28"/><rect x="396.62" y="1136.04" width="35.1" height="0.7" fill="#fff" opacity=".28"/><rect x="396.62" y="1133.49" width="35.1" height="0.7" fill="#fff" opacity=".28"/><rect x="396.62" y="1130.49" width="35.1" height="0.7" fill="#fff" opacity=".28"/><rect x="396.62" y="1126.28" width="35.1" height="0.7" fill="#fff" opacity=".28"/><rect x="396.62" y="1120.51" width="35.1" height="0.7" fill="#fff" opacity=".28"/><rect x="396.62" y="1115.18" width="35.1" height="0.7" fill="#fff" opacity=".28"/></g><g clip-path="url(#cb4)"><rect x="441.36" y="1212.29" width="35.1" height="31.71" fill="#b0357a"/><rect x="441.36" y="1185.37" width="35.1" height="27.22" fill="#8628be"/><rect x="441.36" y="1166.73" width="35.1" height="18.94" fill="#3f2dd2"/><rect x="441.36" y="1087.00" width="35.1" height="80.03" fill="#c81e40"/><rect x="441.36" y="1061.12" width="35.1" height="26.19" fill="#2599a8"/><rect x="441.36" y="1052.83" width="35.1" height="8.58" fill="#2a60bf"/><rect x="441.36" y="1043.93" width="35.1" height="9.20" fill="#8fb038"/><rect x="441.36" y="1039.79" width="35.1" height="4.44" fill="#e01f26"/><rect x="441.36" y="1036.68" width="35.1" height="3.41" fill="#3aae48"/><rect x="441.36" y="1007.90" width="35.1" height="29.08" fill="#6ca844"/><rect x="441.36" y="995.47" width="35.1" height="12.72" fill="#d9480f"/><rect x="441.36" y="988.02" width="35.1" height="7.75" fill="#25a878"/><rect x="441.36" y="983.46" width="35.1" height="4.86" fill="#a33db0"/><rect x="441.36" y="979.73" width="35.1" height="4.03" fill="#4b2acc"/><rect x="441.36" y="977.87" width="35.1" height="2.16" fill="#2bc02b"/><rect x="441.36" y="1211.94" width="35.1" height="0.7" fill="#fff" opacity=".28"/><rect x="441.36" y="1185.02" width="35.1" height="0.7" fill="#fff" opacity=".28"/><rect x="441.36" y="1166.38" width="35.1" height="0.7" fill="#fff" opacity=".28"/><rect x="441.36" y="1086.65" width="35.1" height="0.7" fill="#fff" opacity=".28"/><rect x="441.36" y="1060.77" width="35.1" height="0.7" fill="#fff" opacity=".28"/><rect x="441.36" y="1052.48" width="35.1" height="0.7" fill="#fff" opacity=".28"/><rect x="441.36" y="1043.58" width="35.1" height="0.7" fill="#fff" opacity=".28"/><rect x="441.36" y="1039.44" width="35.1" height="0.7" fill="#fff" opacity=".28"/><rect x="441.36" y="1036.33" width="35.1" height="0.7" fill="#fff" opacity=".28"/><rect x="441.36" y="1007.55" width="35.1" height="0.7" fill="#fff" opacity=".28"/><rect x="441.36" y="995.12" width="35.1" height="0.7" fill="#fff" opacity=".28"/><rect x="441.36" y="987.67" width="35.1" height="0.7" fill="#fff" opacity=".28"/><rect x="441.36" y="983.11" width="35.1" height="0.7" fill="#fff" opacity=".28"/><rect x="441.36" y="979.38" width="35.1" height="0.7" fill="#fff" opacity=".28"/></g><g clip-path="url(#cb5)"><rect x="486.10" y="1222.64" width="35.1" height="21.36" fill="#b0357a"/><rect x="486.10" y="1193.65" width="35.1" height="29.29" fill="#8628be"/><rect x="486.10" y="1181.22" width="35.1" height="12.72" fill="#3f2dd2"/><rect x="486.10" y="1169.83" width="35.1" height="11.69" fill="#c81e40"/><rect x="486.10" y="1162.17" width="35.1" height="7.96" fill="#2599a8"/><rect x="486.10" y="1143.95" width="35.1" height="18.52" fill="#2a60bf"/><rect x="486.10" y="1133.59" width="35.1" height="10.65" fill="#8fb038"/><rect x="486.10" y="1128.42" width="35.1" height="5.48" fill="#e01f26"/><rect x="486.10" y="1122.62" width="35.1" height="6.10" fill="#3aae48"/><rect x="486.10" y="1118.06" width="35.1" height="4.86" fill="#6ca844"/><rect x="486.10" y="1112.47" width="35.1" height="5.89" fill="#d9480f"/><rect x="486.10" y="1109.16" width="35.1" height="3.61" fill="#25a878"/><rect x="486.10" y="1106.05" width="35.1" height="3.41" fill="#a33db0"/><rect x="486.10" y="1100.05" width="35.1" height="6.31" fill="#4b2acc"/><rect x="486.10" y="1096.73" width="35.1" height="3.61" fill="#9ca2ae"/><rect x="486.10" y="1222.29" width="35.1" height="0.7" fill="#fff" opacity=".28"/><rect x="486.10" y="1193.30" width="35.1" height="0.7" fill="#fff" opacity=".28"/><rect x="486.10" y="1180.87" width="35.1" height="0.7" fill="#fff" opacity=".28"/><rect x="486.10" y="1169.48" width="35.1" height="0.7" fill="#fff" opacity=".28"/><rect x="486.10" y="1161.82" width="35.1" height="0.7" fill="#fff" opacity=".28"/><rect x="486.10" y="1143.60" width="35.1" height="0.7" fill="#fff" opacity=".28"/><rect x="486.10" y="1133.24" width="35.1" height="0.7" fill="#fff" opacity=".28"/><rect x="486.10" y="1128.07" width="35.1" height="0.7" fill="#fff" opacity=".28"/><rect x="486.10" y="1122.27" width="35.1" height="0.7" fill="#fff" opacity=".28"/><rect x="486.10" y="1117.71" width="35.1" height="0.7" fill="#fff" opacity=".28"/><rect x="486.10" y="1112.12" width="35.1" height="0.7" fill="#fff" opacity=".28"/><rect x="486.10" y="1108.81" width="35.1" height="0.7" fill="#fff" opacity=".28"/><rect x="486.10" y="1105.70" width="35.1" height="0.7" fill="#fff" opacity=".28"/><rect x="486.10" y="1099.70" width="35.1" height="0.7" fill="#fff" opacity=".28"/></g><g clip-path="url(#cb6)"><rect x="530.84" y="1229.47" width="35.1" height="14.53" fill="#b0357a"/><rect x="530.84" y="1209.18" width="35.1" height="20.59" fill="#8628be"/><rect x="530.84" y="1199.45" width="35.1" height="10.03" fill="#3f2dd2"/><rect x="530.84" y="1147.06" width="35.1" height="52.69" fill="#c81e40"/><rect x="530.84" y="1128.00" width="35.1" height="19.35" fill="#2599a8"/><rect x="530.84" y="1115.58" width="35.1" height="12.72" fill="#2a60bf"/><rect x="530.84" y="1108.33" width="35.1" height="7.55" fill="#8fb038"/><rect x="530.84" y="1102.53" width="35.1" height="6.10" fill="#e01f26"/><rect x="530.84" y="1099.84" width="35.1" height="2.99" fill="#3aae48"/><rect x="530.84" y="1076.65" width="35.1" height="23.49" fill="#6ca844"/><rect x="530.84" y="1059.46" width="35.1" height="17.49" fill="#d9480f"/><rect x="530.84" y="1055.32" width="35.1" height="4.44" fill="#25a878"/><rect x="530.84" y="1049.11" width="35.1" height="6.51" fill="#a33db0"/><rect x="530.84" y="1046.21" width="35.1" height="3.20" fill="#4b2acc"/><rect x="530.84" y="1043.51" width="35.1" height="2.99" fill="#2bc02b"/><rect x="530.84" y="1229.12" width="35.1" height="0.7" fill="#fff" opacity=".28"/><rect x="530.84" y="1208.83" width="35.1" height="0.7" fill="#fff" opacity=".28"/><rect x="530.84" y="1199.10" width="35.1" height="0.7" fill="#fff" opacity=".28"/><rect x="530.84" y="1146.71" width="35.1" height="0.7" fill="#fff" opacity=".28"/><rect x="530.84" y="1127.65" width="35.1" height="0.7" fill="#fff" opacity=".28"/><rect x="530.84" y="1115.23" width="35.1" height="0.7" fill="#fff" opacity=".28"/><rect x="530.84" y="1107.98" width="35.1" height="0.7" fill="#fff" opacity=".28"/><rect x="530.84" y="1102.18" width="35.1" height="0.7" fill="#fff" opacity=".28"/><rect x="530.84" y="1099.49" width="35.1" height="0.7" fill="#fff" opacity=".28"/><rect x="530.84" y="1076.30" width="35.1" height="0.7" fill="#fff" opacity=".28"/><rect x="530.84" y="1059.11" width="35.1" height="0.7" fill="#fff" opacity=".28"/><rect x="530.84" y="1054.97" width="35.1" height="0.7" fill="#fff" opacity=".28"/><rect x="530.84" y="1048.76" width="35.1" height="0.7" fill="#fff" opacity=".28"/><rect x="530.84" y="1045.86" width="35.1" height="0.7" fill="#fff" opacity=".28"/></g><g clip-path="url(#cb7)"><rect x="575.58" y="1228.23" width="35.1" height="15.77" fill="#b0357a"/><rect x="575.58" y="1210.84" width="35.1" height="17.69" fill="#8628be"/><rect x="575.58" y="1202.35" width="35.1" height="8.79" fill="#3f2dd2"/><rect x="575.58" y="1185.37" width="35.1" height="17.28" fill="#c81e40"/><rect x="575.58" y="1170.87" width="35.1" height="14.80" fill="#2599a8"/><rect x="575.58" y="1163.62" width="35.1" height="7.55" fill="#2a60bf"/><rect x="575.58" y="1150.78" width="35.1" height="13.14" fill="#8fb038"/><rect x="575.58" y="1149.33" width="35.1" height="1.75" fill="#e01f26"/><rect x="575.58" y="1145.19" width="35.1" height="4.44" fill="#3aae48"/><rect x="575.58" y="1138.15" width="35.1" height="7.34" fill="#6ca844"/><rect x="575.58" y="1122.62" width="35.1" height="15.83" fill="#d9480f"/><rect x="575.58" y="1116.41" width="35.1" height="6.51" fill="#25a878"/><rect x="575.58" y="1109.16" width="35.1" height="7.55" fill="#a33db0"/><rect x="575.58" y="1105.43" width="35.1" height="4.03" fill="#4b2acc"/><rect x="575.58" y="1103.78" width="35.1" height="1.96" fill="#2bc02b"/><rect x="575.58" y="1227.88" width="35.1" height="0.7" fill="#fff" opacity=".28"/><rect x="575.58" y="1210.49" width="35.1" height="0.7" fill="#fff" opacity=".28"/><rect x="575.58" y="1202.00" width="35.1" height="0.7" fill="#fff" opacity=".28"/><rect x="575.58" y="1185.02" width="35.1" height="0.7" fill="#fff" opacity=".28"/><rect x="575.58" y="1170.52" width="35.1" height="0.7" fill="#fff" opacity=".28"/><rect x="575.58" y="1163.27" width="35.1" height="0.7" fill="#fff" opacity=".28"/><rect x="575.58" y="1150.43" width="35.1" height="0.7" fill="#fff" opacity=".28"/><rect x="575.58" y="1148.98" width="35.1" height="0.7" fill="#fff" opacity=".28"/><rect x="575.58" y="1144.84" width="35.1" height="0.7" fill="#fff" opacity=".28"/><rect x="575.58" y="1137.80" width="35.1" height="0.7" fill="#fff" opacity=".28"/><rect x="575.58" y="1122.27" width="35.1" height="0.7" fill="#fff" opacity=".28"/><rect x="575.58" y="1116.06" width="35.1" height="0.7" fill="#fff" opacity=".28"/><rect x="575.58" y="1108.81" width="35.1" height="0.7" fill="#fff" opacity=".28"/><rect x="575.58" y="1105.08" width="35.1" height="0.7" fill="#fff" opacity=".28"/></g><g clip-path="url(#cb8)"><rect x="620.32" y="1225.30" width="35.1" height="18.70" fill="#b0357a"/><rect x="620.32" y="1190.98" width="35.1" height="34.62" fill="#8628be"/><rect x="620.32" y="1182.69" width="35.1" height="8.58" fill="#3f2dd2"/><rect x="620.32" y="1171.01" width="35.1" height="11.99" fill="#c81e40"/><rect x="620.32" y="1156.21" width="35.1" height="15.09" fill="#2599a8"/><rect x="620.32" y="1146.89" width="35.1" height="9.62" fill="#2a60bf"/><rect x="620.32" y="1139.50" width="35.1" height="7.70" fill="#8fb038"/><rect x="620.32" y="1134.02" width="35.1" height="5.77" fill="#e01f26"/><rect x="620.32" y="1128.40" width="35.1" height="5.92" fill="#3aae48"/><rect x="620.32" y="1125.44" width="35.1" height="3.26" fill="#6ca844"/><rect x="620.32" y="1119.53" width="35.1" height="6.22" fill="#d9480f"/><rect x="620.32" y="1118.79" width="35.1" height="1.04" fill="#25a878"/><rect x="620.32" y="1112.57" width="35.1" height="6.51" fill="#a33db0"/><rect x="620.32" y="1110.65" width="35.1" height="2.22" fill="#2bc02b"/><rect x="620.32" y="1109.17" width="35.1" height="1.78" fill="#9ca2ae"/><rect x="620.32" y="1224.95" width="35.1" height="0.7" fill="#fff" opacity=".28"/><rect x="620.32" y="1190.63" width="35.1" height="0.7" fill="#fff" opacity=".28"/><rect x="620.32" y="1182.34" width="35.1" height="0.7" fill="#fff" opacity=".28"/><rect x="620.32" y="1170.66" width="35.1" height="0.7" fill="#fff" opacity=".28"/><rect x="620.32" y="1155.86" width="35.1" height="0.7" fill="#fff" opacity=".28"/><rect x="620.32" y="1146.54" width="35.1" height="0.7" fill="#fff" opacity=".28"/><rect x="620.32" y="1139.15" width="35.1" height="0.7" fill="#fff" opacity=".28"/><rect x="620.32" y="1133.67" width="35.1" height="0.7" fill="#fff" opacity=".28"/><rect x="620.32" y="1128.05" width="35.1" height="0.7" fill="#fff" opacity=".28"/><rect x="620.32" y="1125.09" width="35.1" height="0.7" fill="#fff" opacity=".28"/><rect x="620.32" y="1119.18" width="35.1" height="0.7" fill="#fff" opacity=".28"/><rect x="620.32" y="1118.44" width="35.1" height="0.7" fill="#fff" opacity=".28"/><rect x="620.32" y="1112.22" width="35.1" height="0.7" fill="#fff" opacity=".28"/><rect x="620.32" y="1110.30" width="35.1" height="0.7" fill="#fff" opacity=".28"/></g><g clip-path="url(#cb9)"><rect x="665.06" y="1212.43" width="35.1" height="31.57" fill="#b0357a"/><rect x="665.06" y="1182.40" width="35.1" height="30.33" fill="#8628be"/><rect x="665.06" y="1166.86" width="35.1" height="15.83" fill="#3f2dd2"/><rect x="665.06" y="1159.76" width="35.1" height="7.40" fill="#c81e40"/><rect x="665.06" y="1150.89" width="35.1" height="9.18" fill="#2599a8"/><rect x="665.06" y="1142.75" width="35.1" height="8.44" fill="#2a60bf"/><rect x="665.06" y="1133.88" width="35.1" height="9.18" fill="#8fb038"/><rect x="665.06" y="1125.44" width="35.1" height="8.73" fill="#e01f26"/><rect x="665.06" y="1116.86" width="35.1" height="8.88" fill="#3aae48"/><rect x="665.06" y="1112.13" width="35.1" height="5.03" fill="#6ca844"/><rect x="665.06" y="1110.95" width="35.1" height="1.48" fill="#d9480f"/><rect x="665.06" y="1105.47" width="35.1" height="5.77" fill="#25a878"/><rect x="665.06" y="1103.55" width="35.1" height="2.22" fill="#a33db0"/><rect x="665.06" y="1099.85" width="35.1" height="4.00" fill="#4b2acc"/><rect x="665.06" y="1097.78" width="35.1" height="2.37" fill="#2bc02b"/><rect x="665.06" y="1212.08" width="35.1" height="0.7" fill="#fff" opacity=".28"/><rect x="665.06" y="1182.05" width="35.1" height="0.7" fill="#fff" opacity=".28"/><rect x="665.06" y="1166.51" width="35.1" height="0.7" fill="#fff" opacity=".28"/><rect x="665.06" y="1159.41" width="35.1" height="0.7" fill="#fff" opacity=".28"/><rect x="665.06" y="1150.54" width="35.1" height="0.7" fill="#fff" opacity=".28"/><rect x="665.06" y="1142.40" width="35.1" height="0.7" fill="#fff" opacity=".28"/><rect x="665.06" y="1133.53" width="35.1" height="0.7" fill="#fff" opacity=".28"/><rect x="665.06" y="1125.09" width="35.1" height="0.7" fill="#fff" opacity=".28"/><rect x="665.06" y="1116.51" width="35.1" height="0.7" fill="#fff" opacity=".28"/><rect x="665.06" y="1111.78" width="35.1" height="0.7" fill="#fff" opacity=".28"/><rect x="665.06" y="1110.60" width="35.1" height="0.7" fill="#fff" opacity=".28"/><rect x="665.06" y="1105.12" width="35.1" height="0.7" fill="#fff" opacity=".28"/><rect x="665.06" y="1103.20" width="35.1" height="0.7" fill="#fff" opacity=".28"/><rect x="665.06" y="1099.50" width="35.1" height="0.7" fill="#fff" opacity=".28"/></g><g clip-path="url(#cb10)"><rect x="709.80" y="1219.38" width="35.1" height="24.62" fill="#b0357a"/><rect x="709.80" y="1199.41" width="35.1" height="20.27" fill="#8628be"/><rect x="709.80" y="1190.98" width="35.1" height="8.73" fill="#3f2dd2"/><rect x="709.80" y="1180.92" width="35.1" height="10.36" fill="#c81e40"/><rect x="709.80" y="1172.49" width="35.1" height="8.73" fill="#2599a8"/><rect x="709.80" y="1160.95" width="35.1" height="11.84" fill="#2a60bf"/><rect x="709.80" y="1151.04" width="35.1" height="10.21" fill="#8fb038"/><rect x="709.80" y="1145.71" width="35.1" height="5.63" fill="#e01f26"/><rect x="709.80" y="1140.98" width="35.1" height="5.03" fill="#3aae48"/><rect x="709.80" y="1134.02" width="35.1" height="7.25" fill="#6ca844"/><rect x="709.80" y="1129.59" width="35.1" height="4.74" fill="#25a878"/><rect x="709.80" y="1126.18" width="35.1" height="3.70" fill="#a33db0"/><rect x="709.80" y="1119.53" width="35.1" height="6.96" fill="#4b2acc"/><rect x="709.80" y="1116.86" width="35.1" height="2.96" fill="#2bc02b"/><rect x="709.80" y="1114.79" width="35.1" height="2.37" fill="#9ca2ae"/><rect x="709.80" y="1219.03" width="35.1" height="0.7" fill="#fff" opacity=".28"/><rect x="709.80" y="1199.06" width="35.1" height="0.7" fill="#fff" opacity=".28"/><rect x="709.80" y="1190.63" width="35.1" height="0.7" fill="#fff" opacity=".28"/><rect x="709.80" y="1180.57" width="35.1" height="0.7" fill="#fff" opacity=".28"/><rect x="709.80" y="1172.14" width="35.1" height="0.7" fill="#fff" opacity=".28"/><rect x="709.80" y="1160.60" width="35.1" height="0.7" fill="#fff" opacity=".28"/><rect x="709.80" y="1150.69" width="35.1" height="0.7" fill="#fff" opacity=".28"/><rect x="709.80" y="1145.36" width="35.1" height="0.7" fill="#fff" opacity=".28"/><rect x="709.80" y="1140.63" width="35.1" height="0.7" fill="#fff" opacity=".28"/><rect x="709.80" y="1133.67" width="35.1" height="0.7" fill="#fff" opacity=".28"/><rect x="709.80" y="1129.24" width="35.1" height="0.7" fill="#fff" opacity=".28"/><rect x="709.80" y="1125.83" width="35.1" height="0.7" fill="#fff" opacity=".28"/><rect x="709.80" y="1119.18" width="35.1" height="0.7" fill="#fff" opacity=".28"/><rect x="709.80" y="1116.51" width="35.1" height="0.7" fill="#fff" opacity=".28"/></g><g clip-path="url(#cb11)"><rect x="754.54" y="1219.38" width="35.1" height="24.62" fill="#b0357a"/><rect x="754.54" y="1196.45" width="35.1" height="23.23" fill="#8628be"/><rect x="754.54" y="1186.83" width="35.1" height="9.92" fill="#3f2dd2"/><rect x="754.54" y="1181.21" width="35.1" height="5.92" fill="#c81e40"/><rect x="754.54" y="1173.52" width="35.1" height="7.99" fill="#2599a8"/><rect x="754.54" y="1163.91" width="35.1" height="9.92" fill="#2a60bf"/><rect x="754.54" y="1157.99" width="35.1" height="6.22" fill="#8fb038"/><rect x="754.54" y="1149.85" width="35.1" height="8.44" fill="#e01f26"/><rect x="754.54" y="1145.41" width="35.1" height="4.74" fill="#3aae48"/><rect x="754.54" y="1142.46" width="35.1" height="3.26" fill="#6ca844"/><rect x="754.54" y="1135.50" width="35.1" height="7.25" fill="#d9480f"/><rect x="754.54" y="1132.40" width="35.1" height="3.41" fill="#25a878"/><rect x="754.54" y="1129.14" width="35.1" height="3.55" fill="#a33db0"/><rect x="754.54" y="1123.96" width="35.1" height="5.48" fill="#4b2acc"/><rect x="754.54" y="1122.19" width="35.1" height="2.08" fill="#2bc02b"/><rect x="754.54" y="1219.03" width="35.1" height="0.7" fill="#fff" opacity=".28"/><rect x="754.54" y="1196.10" width="35.1" height="0.7" fill="#fff" opacity=".28"/><rect x="754.54" y="1186.48" width="35.1" height="0.7" fill="#fff" opacity=".28"/><rect x="754.54" y="1180.86" width="35.1" height="0.7" fill="#fff" opacity=".28"/><rect x="754.54" y="1173.17" width="35.1" height="0.7" fill="#fff" opacity=".28"/><rect x="754.54" y="1163.56" width="35.1" height="0.7" fill="#fff" opacity=".28"/><rect x="754.54" y="1157.64" width="35.1" height="0.7" fill="#fff" opacity=".28"/><rect x="754.54" y="1149.50" width="35.1" height="0.7" fill="#fff" opacity=".28"/><rect x="754.54" y="1145.06" width="35.1" height="0.7" fill="#fff" opacity=".28"/><rect x="754.54" y="1142.11" width="35.1" height="0.7" fill="#fff" opacity=".28"/><rect x="754.54" y="1135.15" width="35.1" height="0.7" fill="#fff" opacity=".28"/><rect x="754.54" y="1132.05" width="35.1" height="0.7" fill="#fff" opacity=".28"/><rect x="754.54" y="1128.79" width="35.1" height="0.7" fill="#fff" opacity=".28"/><rect x="754.54" y="1123.61" width="35.1" height="0.7" fill="#fff" opacity=".28"/></g><g clip-path="url(#cb12)"><rect x="799.28" y="1206.47" width="35.1" height="37.53" fill="#b0357a"/><rect x="799.28" y="1180.77" width="35.1" height="26.00" fill="#8628be"/><rect x="799.28" y="1169.59" width="35.1" height="11.48" fill="#3f2dd2"/><rect x="799.28" y="1159.87" width="35.1" height="10.02" fill="#c81e40"/><rect x="799.28" y="1143.49" width="35.1" height="16.68" fill="#2599a8"/><rect x="799.28" y="1136.97" width="35.1" height="6.82" fill="#2a60bf"/><rect x="799.28" y="1123.65" width="35.1" height="13.61" fill="#8fb038"/><rect x="799.28" y="1122.32" width="35.1" height="1.63" fill="#e01f26"/><rect x="799.28" y="1113.27" width="35.1" height="9.35" fill="#3aae48"/><rect x="799.28" y="1108.21" width="35.1" height="5.36" fill="#6ca844"/><rect x="799.28" y="1102.62" width="35.1" height="5.89" fill="#d9480f"/><rect x="799.28" y="1095.30" width="35.1" height="7.62" fill="#25a878"/><rect x="799.28" y="1089.31" width="35.1" height="6.29" fill="#a33db0"/><rect x="799.28" y="1086.91" width="35.1" height="2.70" fill="#4b2acc"/><rect x="799.28" y="1085.04" width="35.1" height="2.16" fill="#2bc02b"/><rect x="799.28" y="1079.59" width="35.1" height="5.76" fill="#9ca2ae"/><rect x="799.28" y="1206.12" width="35.1" height="0.7" fill="#fff" opacity=".28"/><rect x="799.28" y="1180.42" width="35.1" height="0.7" fill="#fff" opacity=".28"/><rect x="799.28" y="1169.24" width="35.1" height="0.7" fill="#fff" opacity=".28"/><rect x="799.28" y="1159.52" width="35.1" height="0.7" fill="#fff" opacity=".28"/><rect x="799.28" y="1143.14" width="35.1" height="0.7" fill="#fff" opacity=".28"/><rect x="799.28" y="1136.62" width="35.1" height="0.7" fill="#fff" opacity=".28"/><rect x="799.28" y="1123.30" width="35.1" height="0.7" fill="#fff" opacity=".28"/><rect x="799.28" y="1121.97" width="35.1" height="0.7" fill="#fff" opacity=".28"/><rect x="799.28" y="1112.92" width="35.1" height="0.7" fill="#fff" opacity=".28"/><rect x="799.28" y="1107.86" width="35.1" height="0.7" fill="#fff" opacity=".28"/><rect x="799.28" y="1102.27" width="35.1" height="0.7" fill="#fff" opacity=".28"/><rect x="799.28" y="1094.95" width="35.1" height="0.7" fill="#fff" opacity=".28"/><rect x="799.28" y="1088.96" width="35.1" height="0.7" fill="#fff" opacity=".28"/><rect x="799.28" y="1086.56" width="35.1" height="0.7" fill="#fff" opacity=".28"/><rect x="799.28" y="1084.69" width="35.1" height="0.7" fill="#fff" opacity=".28"/></g><g clip-path="url(#cb13)"><rect x="844.02" y="1205.40" width="35.1" height="38.60" fill="#b0357a"/><rect x="844.02" y="1180.77" width="35.1" height="24.93" fill="#8628be"/><rect x="844.02" y="1163.86" width="35.1" height="17.21" fill="#3f2dd2"/><rect x="844.02" y="1160.93" width="35.1" height="3.23" fill="#c81e40"/><rect x="844.02" y="1147.89" width="35.1" height="13.35" fill="#2599a8"/><rect x="844.02" y="1143.89" width="35.1" height="4.29" fill="#2a60bf"/><rect x="844.02" y="1127.92" width="35.1" height="16.28" fill="#8fb038"/><rect x="844.02" y="1125.25" width="35.1" height="2.96" fill="#e01f26"/><rect x="844.02" y="1120.86" width="35.1" height="4.69" fill="#3aae48"/><rect x="844.02" y="1118.20" width="35.1" height="2.96" fill="#6ca844"/><rect x="844.02" y="1112.60" width="35.1" height="5.89" fill="#d9480f"/><rect x="844.02" y="1110.87" width="35.1" height="2.03" fill="#25a878"/><rect x="844.02" y="1107.94" width="35.1" height="3.23" fill="#a33db0"/><rect x="844.02" y="1102.35" width="35.1" height="5.89" fill="#9ca2ae"/><rect x="844.02" y="1205.05" width="35.1" height="0.7" fill="#fff" opacity=".28"/><rect x="844.02" y="1180.42" width="35.1" height="0.7" fill="#fff" opacity=".28"/><rect x="844.02" y="1163.51" width="35.1" height="0.7" fill="#fff" opacity=".28"/><rect x="844.02" y="1160.58" width="35.1" height="0.7" fill="#fff" opacity=".28"/><rect x="844.02" y="1147.54" width="35.1" height="0.7" fill="#fff" opacity=".28"/><rect x="844.02" y="1143.54" width="35.1" height="0.7" fill="#fff" opacity=".28"/><rect x="844.02" y="1127.57" width="35.1" height="0.7" fill="#fff" opacity=".28"/><rect x="844.02" y="1124.90" width="35.1" height="0.7" fill="#fff" opacity=".28"/><rect x="844.02" y="1120.51" width="35.1" height="0.7" fill="#fff" opacity=".28"/><rect x="844.02" y="1117.85" width="35.1" height="0.7" fill="#fff" opacity=".28"/><rect x="844.02" y="1112.25" width="35.1" height="0.7" fill="#fff" opacity=".28"/><rect x="844.02" y="1110.52" width="35.1" height="0.7" fill="#fff" opacity=".28"/><rect x="844.02" y="1107.59" width="35.1" height="0.7" fill="#fff" opacity=".28"/></g><g clip-path="url(#cb14)"><rect x="888.76" y="1222.18" width="35.1" height="21.82" fill="#b0357a"/><rect x="888.76" y="1188.49" width="35.1" height="33.98" fill="#8628be"/><rect x="888.76" y="1178.11" width="35.1" height="10.68" fill="#3f2dd2"/><rect x="888.76" y="1162.80" width="35.1" height="15.61" fill="#c81e40"/><rect x="888.76" y="1146.55" width="35.1" height="16.54" fill="#2599a8"/><rect x="888.76" y="1143.89" width="35.1" height="2.96" fill="#2a60bf"/><rect x="888.76" y="1133.64" width="35.1" height="10.55" fill="#8fb038"/><rect x="888.76" y="1130.98" width="35.1" height="2.96" fill="#e01f26"/><rect x="888.76" y="1120.59" width="35.1" height="10.68" fill="#3aae48"/><rect x="888.76" y="1113.67" width="35.1" height="7.22" fill="#6ca844"/><rect x="888.76" y="1107.94" width="35.1" height="6.02" fill="#d9480f"/><rect x="888.76" y="1102.35" width="35.1" height="5.89" fill="#25a878"/><rect x="888.76" y="1096.63" width="35.1" height="6.02" fill="#a33db0"/><rect x="888.76" y="1095.30" width="35.1" height="1.63" fill="#6ca844"/><rect x="888.76" y="1093.96" width="35.1" height="1.63" fill="#9ca2ae"/><rect x="888.76" y="1221.83" width="35.1" height="0.7" fill="#fff" opacity=".28"/><rect x="888.76" y="1188.14" width="35.1" height="0.7" fill="#fff" opacity=".28"/><rect x="888.76" y="1177.76" width="35.1" height="0.7" fill="#fff" opacity=".28"/><rect x="888.76" y="1162.45" width="35.1" height="0.7" fill="#fff" opacity=".28"/><rect x="888.76" y="1146.20" width="35.1" height="0.7" fill="#fff" opacity=".28"/><rect x="888.76" y="1143.54" width="35.1" height="0.7" fill="#fff" opacity=".28"/><rect x="888.76" y="1133.29" width="35.1" height="0.7" fill="#fff" opacity=".28"/><rect x="888.76" y="1130.63" width="35.1" height="0.7" fill="#fff" opacity=".28"/><rect x="888.76" y="1120.24" width="35.1" height="0.7" fill="#fff" opacity=".28"/><rect x="888.76" y="1113.32" width="35.1" height="0.7" fill="#fff" opacity=".28"/><rect x="888.76" y="1107.59" width="35.1" height="0.7" fill="#fff" opacity=".28"/><rect x="888.76" y="1102.00" width="35.1" height="0.7" fill="#fff" opacity=".28"/><rect x="888.76" y="1096.28" width="35.1" height="0.7" fill="#fff" opacity=".28"/><rect x="888.76" y="1094.95" width="35.1" height="0.7" fill="#fff" opacity=".28"/></g><g clip-path="url(#cb15)"><rect x="933.50" y="1192.34" width="35.1" height="51.66" fill="#b0357a"/><rect x="933.50" y="1165.46" width="35.1" height="27.18" fill="#8628be"/><rect x="933.50" y="1151.00" width="35.1" height="14.76" fill="#3f2dd2"/><rect x="933.50" y="1136.88" width="35.1" height="14.42" fill="#c81e40"/><rect x="933.50" y="1118.16" width="35.1" height="19.01" fill="#2599a8"/><rect x="933.50" y="1108.13" width="35.1" height="10.34" fill="#2a60bf"/><rect x="933.50" y="1088.05" width="35.1" height="20.37" fill="#8fb038"/><rect x="933.50" y="1082.95" width="35.1" height="5.40" fill="#e01f26"/><rect x="933.50" y="1076.65" width="35.1" height="6.59" fill="#3aae48"/><rect x="933.50" y="1069.68" width="35.1" height="7.28" fill="#6ca844"/><rect x="933.50" y="1063.89" width="35.1" height="6.08" fill="#d9480f"/><rect x="933.50" y="1053.68" width="35.1" height="10.51" fill="#25a878"/><rect x="933.50" y="1048.07" width="35.1" height="5.91" fill="#a33db0"/><rect x="933.50" y="1043.82" width="35.1" height="4.55" fill="#4b2acc"/><rect x="933.50" y="1042.12" width="35.1" height="2.00" fill="#2bc02b"/><rect x="933.50" y="1038.20" width="35.1" height="4.21" fill="#9ca2ae"/><rect x="933.50" y="1191.99" width="35.1" height="0.7" fill="#fff" opacity=".28"/><rect x="933.50" y="1165.11" width="35.1" height="0.7" fill="#fff" opacity=".28"/><rect x="933.50" y="1150.65" width="35.1" height="0.7" fill="#fff" opacity=".28"/><rect x="933.50" y="1136.53" width="35.1" height="0.7" fill="#fff" opacity=".28"/><rect x="933.50" y="1117.81" width="35.1" height="0.7" fill="#fff" opacity=".28"/><rect x="933.50" y="1107.78" width="35.1" height="0.7" fill="#fff" opacity=".28"/><rect x="933.50" y="1087.70" width="35.1" height="0.7" fill="#fff" opacity=".28"/><rect x="933.50" y="1082.60" width="35.1" height="0.7" fill="#fff" opacity=".28"/><rect x="933.50" y="1076.30" width="35.1" height="0.7" fill="#fff" opacity=".28"/><rect x="933.50" y="1069.33" width="35.1" height="0.7" fill="#fff" opacity=".28"/><rect x="933.50" y="1063.54" width="35.1" height="0.7" fill="#fff" opacity=".28"/><rect x="933.50" y="1053.33" width="35.1" height="0.7" fill="#fff" opacity=".28"/><rect x="933.50" y="1047.72" width="35.1" height="0.7" fill="#fff" opacity=".28"/><rect x="933.50" y="1043.47" width="35.1" height="0.7" fill="#fff" opacity=".28"/><rect x="933.50" y="1041.77" width="35.1" height="0.7" fill="#fff" opacity=".28"/></g><g clip-path="url(#cb16)"><rect x="978.24" y="1205.44" width="35.1" height="38.56" fill="#b0357a"/><rect x="978.24" y="1181.11" width="35.1" height="24.63" fill="#8628be"/><rect x="978.24" y="1165.46" width="35.1" height="15.95" fill="#3f2dd2"/><rect x="978.24" y="1155.59" width="35.1" height="10.17" fill="#c81e40"/><rect x="978.24" y="1140.79" width="35.1" height="15.10" fill="#2599a8"/><rect x="978.24" y="1125.82" width="35.1" height="15.27" fill="#2a60bf"/><rect x="978.24" y="1106.76" width="35.1" height="19.35" fill="#8fb038"/><rect x="978.24" y="1096.90" width="35.1" height="10.17" fill="#e01f26"/><rect x="978.24" y="1086.35" width="35.1" height="10.85" fill="#3aae48"/><rect x="978.24" y="1075.29" width="35.1" height="11.36" fill="#6ca844"/><rect x="978.24" y="1065.42" width="35.1" height="10.17" fill="#d9480f"/><rect x="978.24" y="1062.19" width="35.1" height="3.53" fill="#25a878"/><rect x="978.24" y="1046.37" width="35.1" height="16.12" fill="#a33db0"/><rect x="978.24" y="1042.46" width="35.1" height="4.21" fill="#4b2acc"/><rect x="978.24" y="1035.31" width="35.1" height="7.45" fill="#2bc02b"/><rect x="978.24" y="1032.25" width="35.1" height="3.36" fill="#9ca2ae"/><rect x="978.24" y="1205.09" width="35.1" height="0.7" fill="#fff" opacity=".28"/><rect x="978.24" y="1180.76" width="35.1" height="0.7" fill="#fff" opacity=".28"/><rect x="978.24" y="1165.11" width="35.1" height="0.7" fill="#fff" opacity=".28"/><rect x="978.24" y="1155.24" width="35.1" height="0.7" fill="#fff" opacity=".28"/><rect x="978.24" y="1140.44" width="35.1" height="0.7" fill="#fff" opacity=".28"/><rect x="978.24" y="1125.47" width="35.1" height="0.7" fill="#fff" opacity=".28"/><rect x="978.24" y="1106.41" width="35.1" height="0.7" fill="#fff" opacity=".28"/><rect x="978.24" y="1096.55" width="35.1" height="0.7" fill="#fff" opacity=".28"/><rect x="978.24" y="1086.00" width="35.1" height="0.7" fill="#fff" opacity=".28"/><rect x="978.24" y="1074.94" width="35.1" height="0.7" fill="#fff" opacity=".28"/><rect x="978.24" y="1065.07" width="35.1" height="0.7" fill="#fff" opacity=".28"/><rect x="978.24" y="1061.84" width="35.1" height="0.7" fill="#fff" opacity=".28"/><rect x="978.24" y="1046.02" width="35.1" height="0.7" fill="#fff" opacity=".28"/><rect x="978.24" y="1042.11" width="35.1" height="0.7" fill="#fff" opacity=".28"/><rect x="978.24" y="1034.96" width="35.1" height="0.7" fill="#fff" opacity=".28"/></g><g clip-path="url(#cb17)"><rect x="1022.98" y="1213.94" width="35.1" height="30.06" fill="#b0357a"/><rect x="1022.98" y="1182.47" width="35.1" height="31.77" fill="#8628be"/><rect x="1022.98" y="1166.65" width="35.1" height="16.12" fill="#3f2dd2"/><rect x="1022.98" y="1159.50" width="35.1" height="7.45" fill="#c81e40"/><rect x="1022.98" y="1140.79" width="35.1" height="19.01" fill="#2599a8"/><rect x="1022.98" y="1128.37" width="35.1" height="12.72" fill="#2a60bf"/><rect x="1022.98" y="1111.02" width="35.1" height="17.65" fill="#8fb038"/><rect x="1022.98" y="1100.81" width="35.1" height="10.51" fill="#e01f26"/><rect x="1022.98" y="1093.49" width="35.1" height="7.62" fill="#3aae48"/><rect x="1022.98" y="1091.45" width="35.1" height="2.34" fill="#d9480f"/><rect x="1022.98" y="1089.41" width="35.1" height="2.34" fill="#25a878"/><rect x="1022.98" y="1083.29" width="35.1" height="6.42" fill="#a33db0"/><rect x="1022.98" y="1078.18" width="35.1" height="5.40" fill="#4b2acc"/><rect x="1022.98" y="1075.29" width="35.1" height="3.19" fill="#2bc02b"/><rect x="1022.98" y="1068.15" width="35.1" height="7.45" fill="#9ca2ae"/><rect x="1022.98" y="1213.59" width="35.1" height="0.7" fill="#fff" opacity=".28"/><rect x="1022.98" y="1182.12" width="35.1" height="0.7" fill="#fff" opacity=".28"/><rect x="1022.98" y="1166.30" width="35.1" height="0.7" fill="#fff" opacity=".28"/><rect x="1022.98" y="1159.15" width="35.1" height="0.7" fill="#fff" opacity=".28"/><rect x="1022.98" y="1140.44" width="35.1" height="0.7" fill="#fff" opacity=".28"/><rect x="1022.98" y="1128.02" width="35.1" height="0.7" fill="#fff" opacity=".28"/><rect x="1022.98" y="1110.67" width="35.1" height="0.7" fill="#fff" opacity=".28"/><rect x="1022.98" y="1100.46" width="35.1" height="0.7" fill="#fff" opacity=".28"/><rect x="1022.98" y="1093.14" width="35.1" height="0.7" fill="#fff" opacity=".28"/><rect x="1022.98" y="1091.10" width="35.1" height="0.7" fill="#fff" opacity=".28"/><rect x="1022.98" y="1089.06" width="35.1" height="0.7" fill="#fff" opacity=".28"/><rect x="1022.98" y="1082.94" width="35.1" height="0.7" fill="#fff" opacity=".28"/><rect x="1022.98" y="1077.83" width="35.1" height="0.7" fill="#fff" opacity=".28"/><rect x="1022.98" y="1074.94" width="35.1" height="0.7" fill="#fff" opacity=".28"/></g><g clip-path="url(#cb18)"><rect x="1067.72" y="1213.94" width="35.1" height="30.06" fill="#b0357a"/><rect x="1067.72" y="1190.98" width="35.1" height="23.27" fill="#8628be"/><rect x="1067.72" y="1170.90" width="35.1" height="20.37" fill="#3f2dd2"/><rect x="1067.72" y="1165.80" width="35.1" height="5.40" fill="#c81e40"/><rect x="1067.72" y="1156.10" width="35.1" height="10.00" fill="#2599a8"/><rect x="1067.72" y="1143.85" width="35.1" height="12.55" fill="#2a60bf"/><rect x="1067.72" y="1133.64" width="35.1" height="10.51" fill="#8fb038"/><rect x="1067.72" y="1128.54" width="35.1" height="5.40" fill="#e01f26"/><rect x="1067.72" y="1123.78" width="35.1" height="5.06" fill="#3aae48"/><rect x="1067.72" y="1119.52" width="35.1" height="4.55" fill="#d9480f"/><rect x="1067.72" y="1112.72" width="35.1" height="7.11" fill="#25a878"/><rect x="1067.72" y="1108.81" width="35.1" height="4.21" fill="#a33db0"/><rect x="1067.72" y="1103.87" width="35.1" height="5.23" fill="#4b2acc"/><rect x="1067.72" y="1096.90" width="35.1" height="7.28" fill="#9ca2ae"/><rect x="1067.72" y="1213.59" width="35.1" height="0.7" fill="#fff" opacity=".28"/><rect x="1067.72" y="1190.63" width="35.1" height="0.7" fill="#fff" opacity=".28"/><rect x="1067.72" y="1170.55" width="35.1" height="0.7" fill="#fff" opacity=".28"/><rect x="1067.72" y="1165.45" width="35.1" height="0.7" fill="#fff" opacity=".28"/><rect x="1067.72" y="1155.75" width="35.1" height="0.7" fill="#fff" opacity=".28"/><rect x="1067.72" y="1143.50" width="35.1" height="0.7" fill="#fff" opacity=".28"/><rect x="1067.72" y="1133.29" width="35.1" height="0.7" fill="#fff" opacity=".28"/><rect x="1067.72" y="1128.19" width="35.1" height="0.7" fill="#fff" opacity=".28"/><rect x="1067.72" y="1123.43" width="35.1" height="0.7" fill="#fff" opacity=".28"/><rect x="1067.72" y="1119.17" width="35.1" height="0.7" fill="#fff" opacity=".28"/><rect x="1067.72" y="1112.37" width="35.1" height="0.7" fill="#fff" opacity=".28"/><rect x="1067.72" y="1108.46" width="35.1" height="0.7" fill="#fff" opacity=".28"/><rect x="1067.72" y="1103.52" width="35.1" height="0.7" fill="#fff" opacity=".28"/></g><g clip-path="url(#cb19)"><rect x="1112.46" y="1209.51" width="35.1" height="34.49" fill="#b0357a"/><rect x="1112.46" y="1186.63" width="35.1" height="23.18" fill="#8628be"/><rect x="1112.46" y="1173.68" width="35.1" height="13.25" fill="#3f2dd2"/><rect x="1112.46" y="1165.50" width="35.1" height="8.47" fill="#c81e40"/><rect x="1112.46" y="1153.31" width="35.1" height="12.50" fill="#2599a8"/><rect x="1112.46" y="1140.98" width="35.1" height="12.62" fill="#2a60bf"/><rect x="1112.46" y="1130.92" width="35.1" height="10.36" fill="#8fb038"/><rect x="1112.46" y="1125.64" width="35.1" height="5.58" fill="#e01f26"/><rect x="1112.46" y="1123.38" width="35.1" height="2.56" fill="#3aae48"/><rect x="1112.46" y="1121.75" width="35.1" height="1.93" fill="#6ca844"/><rect x="1112.46" y="1120.24" width="35.1" height="1.81" fill="#25a878"/><rect x="1112.46" y="1117.09" width="35.1" height="3.44" fill="#a33db0"/><rect x="1112.46" y="1115.21" width="35.1" height="2.19" fill="#4b2acc"/><rect x="1112.46" y="1113.95" width="35.1" height="1.56" fill="#9ca2ae"/><rect x="1112.46" y="1209.16" width="35.1" height="0.7" fill="#fff" opacity=".28"/><rect x="1112.46" y="1186.28" width="35.1" height="0.7" fill="#fff" opacity=".28"/><rect x="1112.46" y="1173.33" width="35.1" height="0.7" fill="#fff" opacity=".28"/><rect x="1112.46" y="1165.15" width="35.1" height="0.7" fill="#fff" opacity=".28"/><rect x="1112.46" y="1152.96" width="35.1" height="0.7" fill="#fff" opacity=".28"/><rect x="1112.46" y="1140.63" width="35.1" height="0.7" fill="#fff" opacity=".28"/><rect x="1112.46" y="1130.57" width="35.1" height="0.7" fill="#fff" opacity=".28"/><rect x="1112.46" y="1125.29" width="35.1" height="0.7" fill="#fff" opacity=".28"/><rect x="1112.46" y="1123.03" width="35.1" height="0.7" fill="#fff" opacity=".28"/><rect x="1112.46" y="1121.40" width="35.1" height="0.7" fill="#fff" opacity=".28"/><rect x="1112.46" y="1119.89" width="35.1" height="0.7" fill="#fff" opacity=".28"/><rect x="1112.46" y="1116.74" width="35.1" height="0.7" fill="#fff" opacity=".28"/><rect x="1112.46" y="1114.86" width="35.1" height="0.7" fill="#fff" opacity=".28"/></g><g clip-path="url(#cb20)"><rect x="1157.20" y="1231.26" width="35.1" height="12.74" fill="#b0357a"/><rect x="1157.20" y="1212.28" width="35.1" height="19.29" fill="#8628be"/><rect x="1157.20" y="1196.94" width="35.1" height="15.64" fill="#3f2dd2"/><rect x="1157.20" y="1190.02" width="35.1" height="7.22" fill="#c81e40"/><rect x="1157.20" y="1176.19" width="35.1" height="14.13" fill="#2599a8"/><rect x="1157.20" y="1165.50" width="35.1" height="10.99" fill="#2a60bf"/><rect x="1157.20" y="1155.07" width="35.1" height="10.74" fill="#8fb038"/><rect x="1157.20" y="1145.64" width="35.1" height="9.73" fill="#e01f26"/><rect x="1157.20" y="1143.50" width="35.1" height="2.44" fill="#3aae48"/><rect x="1157.20" y="1140.98" width="35.1" height="2.81" fill="#6ca844"/><rect x="1157.20" y="1136.83" width="35.1" height="4.45" fill="#d9480f"/><rect x="1157.20" y="1130.92" width="35.1" height="6.21" fill="#25a878"/><rect x="1157.20" y="1125.27" width="35.1" height="5.96" fill="#a33db0"/><rect x="1157.20" y="1123.76" width="35.1" height="1.81" fill="#4b2acc"/><rect x="1157.20" y="1120.49" width="35.1" height="3.57" fill="#2bc02b"/><rect x="1157.20" y="1119.61" width="35.1" height="1.18" fill="#9ca2ae"/><rect x="1157.20" y="1230.91" width="35.1" height="0.7" fill="#fff" opacity=".28"/><rect x="1157.20" y="1211.93" width="35.1" height="0.7" fill="#fff" opacity=".28"/><rect x="1157.20" y="1196.59" width="35.1" height="0.7" fill="#fff" opacity=".28"/><rect x="1157.20" y="1189.67" width="35.1" height="0.7" fill="#fff" opacity=".28"/><rect x="1157.20" y="1175.84" width="35.1" height="0.7" fill="#fff" opacity=".28"/><rect x="1157.20" y="1165.15" width="35.1" height="0.7" fill="#fff" opacity=".28"/><rect x="1157.20" y="1154.72" width="35.1" height="0.7" fill="#fff" opacity=".28"/><rect x="1157.20" y="1145.29" width="35.1" height="0.7" fill="#fff" opacity=".28"/><rect x="1157.20" y="1143.15" width="35.1" height="0.7" fill="#fff" opacity=".28"/><rect x="1157.20" y="1140.63" width="35.1" height="0.7" fill="#fff" opacity=".28"/><rect x="1157.20" y="1136.48" width="35.1" height="0.7" fill="#fff" opacity=".28"/><rect x="1157.20" y="1130.57" width="35.1" height="0.7" fill="#fff" opacity=".28"/><rect x="1157.20" y="1124.92" width="35.1" height="0.7" fill="#fff" opacity=".28"/><rect x="1157.20" y="1123.41" width="35.1" height="0.7" fill="#fff" opacity=".28"/><rect x="1157.20" y="1120.14" width="35.1" height="0.7" fill="#fff" opacity=".28"/></g><g clip-path="url(#cb21)"><rect x="1201.94" y="1218.31" width="35.1" height="25.69" fill="#b0357a"/><rect x="1201.94" y="1196.56" width="35.1" height="22.05" fill="#8628be"/><rect x="1201.94" y="1185.62" width="35.1" height="11.24" fill="#3f2dd2"/><rect x="1201.94" y="1175.81" width="35.1" height="10.11" fill="#c81e40"/><rect x="1201.94" y="1165.25" width="35.1" height="10.86" fill="#2599a8"/><rect x="1201.94" y="1155.69" width="35.1" height="9.86" fill="#2a60bf"/><rect x="1201.94" y="1147.90" width="35.1" height="8.10" fill="#8fb038"/><rect x="1201.94" y="1139.73" width="35.1" height="8.47" fill="#e01f26"/><rect x="1201.94" y="1138.47" width="35.1" height="1.56" fill="#3aae48"/><rect x="1201.94" y="1133.82" width="35.1" height="4.95" fill="#6ca844"/><rect x="1201.94" y="1129.92" width="35.1" height="4.20" fill="#25a878"/><rect x="1201.94" y="1128.03" width="35.1" height="2.19" fill="#a33db0"/><rect x="1201.94" y="1122.75" width="35.1" height="5.58" fill="#4b2acc"/><rect x="1201.94" y="1119.98" width="35.1" height="3.07" fill="#2bc02b"/><rect x="1201.94" y="1117.97" width="35.1" height="2.31" fill="#9ca2ae"/><rect x="1201.94" y="1217.96" width="35.1" height="0.7" fill="#fff" opacity=".28"/><rect x="1201.94" y="1196.21" width="35.1" height="0.7" fill="#fff" opacity=".28"/><rect x="1201.94" y="1185.27" width="35.1" height="0.7" fill="#fff" opacity=".28"/><rect x="1201.94" y="1175.46" width="35.1" height="0.7" fill="#fff" opacity=".28"/><rect x="1201.94" y="1164.90" width="35.1" height="0.7" fill="#fff" opacity=".28"/><rect x="1201.94" y="1155.34" width="35.1" height="0.7" fill="#fff" opacity=".28"/><rect x="1201.94" y="1147.55" width="35.1" height="0.7" fill="#fff" opacity=".28"/><rect x="1201.94" y="1139.38" width="35.1" height="0.7" fill="#fff" opacity=".28"/><rect x="1201.94" y="1138.12" width="35.1" height="0.7" fill="#fff" opacity=".28"/><rect x="1201.94" y="1133.47" width="35.1" height="0.7" fill="#fff" opacity=".28"/><rect x="1201.94" y="1129.57" width="35.1" height="0.7" fill="#fff" opacity=".28"/><rect x="1201.94" y="1127.68" width="35.1" height="0.7" fill="#fff" opacity=".28"/><rect x="1201.94" y="1122.40" width="35.1" height="0.7" fill="#fff" opacity=".28"/><rect x="1201.94" y="1119.63" width="35.1" height="0.7" fill="#fff" opacity=".28"/></g><g clip-path="url(#cb22)"><rect x="1246.68" y="1218.31" width="35.1" height="25.69" fill="#b0357a"/><rect x="1246.68" y="1194.05" width="35.1" height="24.57" fill="#8628be"/><rect x="1246.68" y="1176.82" width="35.1" height="17.53" fill="#3f2dd2"/><rect x="1246.68" y="1168.39" width="35.1" height="8.72" fill="#c81e40"/><rect x="1246.68" y="1162.36" width="35.1" height="6.34" fill="#2599a8"/><rect x="1246.68" y="1152.68" width="35.1" height="9.98" fill="#2a60bf"/><rect x="1246.68" y="1145.13" width="35.1" height="7.84" fill="#8fb038"/><rect x="1246.68" y="1138.22" width="35.1" height="7.22" fill="#e01f26"/><rect x="1246.68" y="1130.67" width="35.1" height="7.84" fill="#3aae48"/><rect x="1246.68" y="1126.77" width="35.1" height="4.20" fill="#6ca844"/><rect x="1246.68" y="1122.75" width="35.1" height="4.32" fill="#d9480f"/><rect x="1246.68" y="1119.98" width="35.1" height="3.07" fill="#25a878"/><rect x="1246.68" y="1115.21" width="35.1" height="5.08" fill="#a33db0"/><rect x="1246.68" y="1112.69" width="35.1" height="2.81" fill="#4b2acc"/><rect x="1246.68" y="1108.29" width="35.1" height="4.70" fill="#2bc02b"/><rect x="1246.68" y="1105.15" width="35.1" height="3.44" fill="#9ca2ae"/><rect x="1246.68" y="1217.96" width="35.1" height="0.7" fill="#fff" opacity=".28"/><rect x="1246.68" y="1193.70" width="35.1" height="0.7" fill="#fff" opacity=".28"/><rect x="1246.68" y="1176.47" width="35.1" height="0.7" fill="#fff" opacity=".28"/><rect x="1246.68" y="1168.04" width="35.1" height="0.7" fill="#fff" opacity=".28"/><rect x="1246.68" y="1162.01" width="35.1" height="0.7" fill="#fff" opacity=".28"/><rect x="1246.68" y="1152.33" width="35.1" height="0.7" fill="#fff" opacity=".28"/><rect x="1246.68" y="1144.78" width="35.1" height="0.7" fill="#fff" opacity=".28"/><rect x="1246.68" y="1137.87" width="35.1" height="0.7" fill="#fff" opacity=".28"/><rect x="1246.68" y="1130.32" width="35.1" height="0.7" fill="#fff" opacity=".28"/><rect x="1246.68" y="1126.42" width="35.1" height="0.7" fill="#fff" opacity=".28"/><rect x="1246.68" y="1122.40" width="35.1" height="0.7" fill="#fff" opacity=".28"/><rect x="1246.68" y="1119.63" width="35.1" height="0.7" fill="#fff" opacity=".28"/><rect x="1246.68" y="1114.86" width="35.1" height="0.7" fill="#fff" opacity=".28"/><rect x="1246.68" y="1112.34" width="35.1" height="0.7" fill="#fff" opacity=".28"/><rect x="1246.68" y="1107.94" width="35.1" height="0.7" fill="#fff" opacity=".28"/></g><g clip-path="url(#cb23)"><rect x="1291.42" y="1230.92" width="35.1" height="13.08" fill="#b0357a"/><rect x="1291.42" y="1213.95" width="35.1" height="17.28" fill="#8628be"/><rect x="1291.42" y="1200.97" width="35.1" height="13.28" fill="#3f2dd2"/><rect x="1291.42" y="1198.19" width="35.1" height="3.07" fill="#c81e40"/><rect x="1291.42" y="1189.09" width="35.1" height="9.40" fill="#2599a8"/><rect x="1291.42" y="1173.78" width="35.1" height="15.61" fill="#2a60bf"/><rect x="1291.42" y="1172.12" width="35.1" height="1.96" fill="#8fb038"/><rect x="1291.42" y="1165.46" width="35.1" height="6.96" fill="#e01f26"/><rect x="1291.42" y="1162.47" width="35.1" height="3.30" fill="#6ca844"/><rect x="1291.42" y="1160.80" width="35.1" height="1.96" fill="#d9480f"/><rect x="1291.42" y="1158.25" width="35.1" height="2.85" fill="#a33db0"/><rect x="1291.42" y="1156.92" width="35.1" height="1.63" fill="#4b2acc"/><rect x="1291.42" y="1155.14" width="35.1" height="2.08" fill="#2bc02b"/><rect x="1291.42" y="1144.05" width="35.1" height="11.40" fill="#9ca2ae"/><rect x="1291.42" y="1230.57" width="35.1" height="0.7" fill="#fff" opacity=".28"/><rect x="1291.42" y="1213.60" width="35.1" height="0.7" fill="#fff" opacity=".28"/><rect x="1291.42" y="1200.62" width="35.1" height="0.7" fill="#fff" opacity=".28"/><rect x="1291.42" y="1197.84" width="35.1" height="0.7" fill="#fff" opacity=".28"/><rect x="1291.42" y="1188.74" width="35.1" height="0.7" fill="#fff" opacity=".28"/><rect x="1291.42" y="1173.43" width="35.1" height="0.7" fill="#fff" opacity=".28"/><rect x="1291.42" y="1171.77" width="35.1" height="0.7" fill="#fff" opacity=".28"/><rect x="1291.42" y="1165.11" width="35.1" height="0.7" fill="#fff" opacity=".28"/><rect x="1291.42" y="1162.12" width="35.1" height="0.7" fill="#fff" opacity=".28"/><rect x="1291.42" y="1160.45" width="35.1" height="0.7" fill="#fff" opacity=".28"/><rect x="1291.42" y="1157.90" width="35.1" height="0.7" fill="#fff" opacity=".28"/><rect x="1291.42" y="1156.57" width="35.1" height="0.7" fill="#fff" opacity=".28"/><rect x="1291.42" y="1154.79" width="35.1" height="0.7" fill="#fff" opacity=".28"/></g><g clip-path="url(#cb24)"><rect x="1336.16" y="1238.13" width="35.1" height="5.87" fill="#b0357a"/><rect x="1336.16" y="1225.37" width="35.1" height="13.06" fill="#8628be"/><rect x="1336.16" y="1215.39" width="35.1" height="10.29" fill="#3f2dd2"/><rect x="1336.16" y="1213.95" width="35.1" height="1.74" fill="#c81e40"/><rect x="1336.16" y="1206.18" width="35.1" height="8.07" fill="#2599a8"/><rect x="1336.16" y="1195.64" width="35.1" height="10.84" fill="#2a60bf"/><rect x="1336.16" y="1190.98" width="35.1" height="4.96" fill="#8fb038"/><rect x="1336.16" y="1182.66" width="35.1" height="8.62" fill="#e01f26"/><rect x="1336.16" y="1176.56" width="35.1" height="6.40" fill="#25a878"/><rect x="1336.16" y="1174.34" width="35.1" height="2.52" fill="#a33db0"/><rect x="1336.16" y="1173.56" width="35.1" height="1.08" fill="#4b2acc"/><rect x="1336.16" y="1172.12" width="35.1" height="1.74" fill="#2bc02b"/><rect x="1336.16" y="1237.78" width="35.1" height="0.7" fill="#fff" opacity=".28"/><rect x="1336.16" y="1225.02" width="35.1" height="0.7" fill="#fff" opacity=".28"/><rect x="1336.16" y="1215.04" width="35.1" height="0.7" fill="#fff" opacity=".28"/><rect x="1336.16" y="1213.60" width="35.1" height="0.7" fill="#fff" opacity=".28"/><rect x="1336.16" y="1205.83" width="35.1" height="0.7" fill="#fff" opacity=".28"/><rect x="1336.16" y="1195.29" width="35.1" height="0.7" fill="#fff" opacity=".28"/><rect x="1336.16" y="1190.63" width="35.1" height="0.7" fill="#fff" opacity=".28"/><rect x="1336.16" y="1182.31" width="35.1" height="0.7" fill="#fff" opacity=".28"/><rect x="1336.16" y="1176.21" width="35.1" height="0.7" fill="#fff" opacity=".28"/><rect x="1336.16" y="1173.99" width="35.1" height="0.7" fill="#fff" opacity=".28"/><rect x="1336.16" y="1173.21" width="35.1" height="0.7" fill="#fff" opacity=".28"/></g><g clip-path="url(#cb25)"><rect x="1380.90" y="1230.92" width="35.1" height="13.08" fill="#b0357a"/><rect x="1380.90" y="1213.95" width="35.1" height="17.28" fill="#8628be"/><rect x="1380.90" y="1195.42" width="35.1" height="18.83" fill="#3f2dd2"/><rect x="1380.90" y="1186.76" width="35.1" height="8.95" fill="#c81e40"/><rect x="1380.90" y="1171.01" width="35.1" height="16.06" fill="#2599a8"/><rect x="1380.90" y="1159.91" width="35.1" height="11.40" fill="#2a60bf"/><rect x="1380.90" y="1154.92" width="35.1" height="5.29" fill="#8fb038"/><rect x="1380.90" y="1142.72" width="35.1" height="12.50" fill="#e01f26"/><rect x="1380.90" y="1136.61" width="35.1" height="6.40" fill="#3aae48"/><rect x="1380.90" y="1133.84" width="35.1" height="3.07" fill="#6ca844"/><rect x="1380.90" y="1132.51" width="35.1" height="1.63" fill="#d9480f"/><rect x="1380.90" y="1130.84" width="35.1" height="1.96" fill="#25a878"/><rect x="1380.90" y="1125.30" width="35.1" height="5.85" fill="#a33db0"/><rect x="1380.90" y="1120.75" width="35.1" height="4.85" fill="#4b2acc"/><rect x="1380.90" y="1118.08" width="35.1" height="2.96" fill="#9ca2ae"/><rect x="1380.90" y="1230.57" width="35.1" height="0.7" fill="#fff" opacity=".28"/><rect x="1380.90" y="1213.60" width="35.1" height="0.7" fill="#fff" opacity=".28"/><rect x="1380.90" y="1195.07" width="35.1" height="0.7" fill="#fff" opacity=".28"/><rect x="1380.90" y="1186.41" width="35.1" height="0.7" fill="#fff" opacity=".28"/><rect x="1380.90" y="1170.66" width="35.1" height="0.7" fill="#fff" opacity=".28"/><rect x="1380.90" y="1159.56" width="35.1" height="0.7" fill="#fff" opacity=".28"/><rect x="1380.90" y="1154.57" width="35.1" height="0.7" fill="#fff" opacity=".28"/><rect x="1380.90" y="1142.37" width="35.1" height="0.7" fill="#fff" opacity=".28"/><rect x="1380.90" y="1136.26" width="35.1" height="0.7" fill="#fff" opacity=".28"/><rect x="1380.90" y="1133.49" width="35.1" height="0.7" fill="#fff" opacity=".28"/><rect x="1380.90" y="1132.16" width="35.1" height="0.7" fill="#fff" opacity=".28"/><rect x="1380.90" y="1130.49" width="35.1" height="0.7" fill="#fff" opacity=".28"/><rect x="1380.90" y="1124.95" width="35.1" height="0.7" fill="#fff" opacity=".28"/><rect x="1380.90" y="1120.40" width="35.1" height="0.7" fill="#fff" opacity=".28"/></g><g clip-path="url(#cb26)"><rect x="1425.64" y="1229.59" width="35.1" height="14.41" fill="#b0357a"/><rect x="1425.64" y="1210.95" width="35.1" height="18.94" fill="#8628be"/><rect x="1425.64" y="1189.65" width="35.1" height="21.60" fill="#3f2dd2"/><rect x="1425.64" y="1180.99" width="35.1" height="8.95" fill="#c81e40"/><rect x="1425.64" y="1165.46" width="35.1" height="15.83" fill="#2599a8"/><rect x="1425.64" y="1151.04" width="35.1" height="14.72" fill="#2a60bf"/><rect x="1425.64" y="1143.83" width="35.1" height="7.51" fill="#8fb038"/><rect x="1425.64" y="1131.07" width="35.1" height="13.06" fill="#e01f26"/><rect x="1425.64" y="1125.30" width="35.1" height="6.07" fill="#3aae48"/><rect x="1425.64" y="1120.86" width="35.1" height="4.74" fill="#25a878"/><rect x="1425.64" y="1118.08" width="35.1" height="3.07" fill="#4b2acc"/><rect x="1425.64" y="1113.87" width="35.1" height="4.52" fill="#2bc02b"/><rect x="1425.64" y="1109.76" width="35.1" height="4.41" fill="#9ca2ae"/><rect x="1425.64" y="1229.24" width="35.1" height="0.7" fill="#fff" opacity=".28"/><rect x="1425.64" y="1210.60" width="35.1" height="0.7" fill="#fff" opacity=".28"/><rect x="1425.64" y="1189.30" width="35.1" height="0.7" fill="#fff" opacity=".28"/><rect x="1425.64" y="1180.64" width="35.1" height="0.7" fill="#fff" opacity=".28"/><rect x="1425.64" y="1165.11" width="35.1" height="0.7" fill="#fff" opacity=".28"/><rect x="1425.64" y="1150.69" width="35.1" height="0.7" fill="#fff" opacity=".28"/><rect x="1425.64" y="1143.48" width="35.1" height="0.7" fill="#fff" opacity=".28"/><rect x="1425.64" y="1130.72" width="35.1" height="0.7" fill="#fff" opacity=".28"/><rect x="1425.64" y="1124.95" width="35.1" height="0.7" fill="#fff" opacity=".28"/><rect x="1425.64" y="1120.51" width="35.1" height="0.7" fill="#fff" opacity=".28"/><rect x="1425.64" y="1117.73" width="35.1" height="0.7" fill="#fff" opacity=".28"/><rect x="1425.64" y="1113.52" width="35.1" height="0.7" fill="#fff" opacity=".28"/></g><g clip-path="url(#cb27)"><rect x="1470.38" y="1231.08" width="35.1" height="12.92" fill="#b0357a"/><rect x="1470.38" y="1222.30" width="35.1" height="9.09" fill="#8628be"/><rect x="1470.38" y="1193.86" width="35.1" height="28.74" fill="#3f2dd2"/><rect x="1470.38" y="1183.85" width="35.1" height="10.31" fill="#c81e40"/><rect x="1470.38" y="1176.29" width="35.1" height="7.87" fill="#2599a8"/><rect x="1470.38" y="1165.55" width="35.1" height="11.04" fill="#2a60bf"/><rect x="1470.38" y="1160.91" width="35.1" height="4.94" fill="#8fb038"/><rect x="1470.38" y="1148.22" width="35.1" height="12.99" fill="#e01f26"/><rect x="1470.38" y="1146.02" width="35.1" height="2.50" fill="#3aae48"/><rect x="1470.38" y="1144.80" width="35.1" height="1.52" fill="#6ca844"/><rect x="1470.38" y="1143.95" width="35.1" height="1.15" fill="#d9480f"/><rect x="1470.38" y="1138.33" width="35.1" height="5.91" fill="#25a878"/><rect x="1470.38" y="1137.11" width="35.1" height="1.52" fill="#a33db0"/><rect x="1470.38" y="1132.35" width="35.1" height="5.06" fill="#2bc02b"/><rect x="1470.38" y="1230.73" width="35.1" height="0.7" fill="#fff" opacity=".28"/><rect x="1470.38" y="1221.95" width="35.1" height="0.7" fill="#fff" opacity=".28"/><rect x="1470.38" y="1193.51" width="35.1" height="0.7" fill="#fff" opacity=".28"/><rect x="1470.38" y="1183.50" width="35.1" height="0.7" fill="#fff" opacity=".28"/><rect x="1470.38" y="1175.94" width="35.1" height="0.7" fill="#fff" opacity=".28"/><rect x="1470.38" y="1165.20" width="35.1" height="0.7" fill="#fff" opacity=".28"/><rect x="1470.38" y="1160.56" width="35.1" height="0.7" fill="#fff" opacity=".28"/><rect x="1470.38" y="1147.87" width="35.1" height="0.7" fill="#fff" opacity=".28"/><rect x="1470.38" y="1145.67" width="35.1" height="0.7" fill="#fff" opacity=".28"/><rect x="1470.38" y="1144.45" width="35.1" height="0.7" fill="#fff" opacity=".28"/><rect x="1470.38" y="1143.60" width="35.1" height="0.7" fill="#fff" opacity=".28"/><rect x="1470.38" y="1137.98" width="35.1" height="0.7" fill="#fff" opacity=".28"/><rect x="1470.38" y="1136.76" width="35.1" height="0.7" fill="#fff" opacity=".28"/></g><g clip-path="url(#cb28)"><rect x="1515.12" y="1226.57" width="35.1" height="17.43" fill="#b0357a"/><rect x="1515.12" y="1206.67" width="35.1" height="20.19" fill="#8628be"/><rect x="1515.12" y="1198.25" width="35.1" height="8.72" fill="#3f2dd2"/><rect x="1515.12" y="1189.95" width="35.1" height="8.60" fill="#c81e40"/><rect x="1515.12" y="1172.26" width="35.1" height="18.00" fill="#2599a8"/><rect x="1515.12" y="1155.54" width="35.1" height="17.02" fill="#2a60bf"/><rect x="1515.12" y="1135.04" width="35.1" height="20.80" fill="#8fb038"/><rect x="1515.12" y="1119.78" width="35.1" height="15.56" fill="#e01f26"/><rect x="1515.12" y="1113.31" width="35.1" height="6.77" fill="#3aae48"/><rect x="1515.12" y="1112.09" width="35.1" height="1.52" fill="#6ca844"/><rect x="1515.12" y="1109.41" width="35.1" height="2.98" fill="#d9480f"/><rect x="1515.12" y="1103.92" width="35.1" height="5.79" fill="#25a878"/><rect x="1515.12" y="1102.09" width="35.1" height="2.13" fill="#a33db0"/><rect x="1515.12" y="1099.89" width="35.1" height="2.50" fill="#4b2acc"/><rect x="1515.12" y="1097.81" width="35.1" height="2.37" fill="#2bc02b"/><rect x="1515.12" y="1095.37" width="35.1" height="2.74" fill="#9ca2ae"/><rect x="1515.12" y="1226.22" width="35.1" height="0.7" fill="#fff" opacity=".28"/><rect x="1515.12" y="1206.32" width="35.1" height="0.7" fill="#fff" opacity=".28"/><rect x="1515.12" y="1197.90" width="35.1" height="0.7" fill="#fff" opacity=".28"/><rect x="1515.12" y="1189.60" width="35.1" height="0.7" fill="#fff" opacity=".28"/><rect x="1515.12" y="1171.91" width="35.1" height="0.7" fill="#fff" opacity=".28"/><rect x="1515.12" y="1155.19" width="35.1" height="0.7" fill="#fff" opacity=".28"/><rect x="1515.12" y="1134.69" width="35.1" height="0.7" fill="#fff" opacity=".28"/><rect x="1515.12" y="1119.43" width="35.1" height="0.7" fill="#fff" opacity=".28"/><rect x="1515.12" y="1112.96" width="35.1" height="0.7" fill="#fff" opacity=".28"/><rect x="1515.12" y="1111.74" width="35.1" height="0.7" fill="#fff" opacity=".28"/><rect x="1515.12" y="1109.06" width="35.1" height="0.7" fill="#fff" opacity=".28"/><rect x="1515.12" y="1103.57" width="35.1" height="0.7" fill="#fff" opacity=".28"/><rect x="1515.12" y="1101.74" width="35.1" height="0.7" fill="#fff" opacity=".28"/><rect x="1515.12" y="1099.54" width="35.1" height="0.7" fill="#fff" opacity=".28"/><rect x="1515.12" y="1097.46" width="35.1" height="0.7" fill="#fff" opacity=".28"/></g><g clip-path="url(#cb29)"><rect x="1559.86" y="1229.62" width="35.1" height="14.38" fill="#b0357a"/><rect x="1559.86" y="1212.53" width="35.1" height="17.39" fill="#8628be"/><rect x="1559.86" y="1199.72" width="35.1" height="13.11" fill="#3f2dd2"/><rect x="1559.86" y="1192.76" width="35.1" height="7.26" fill="#c81e40"/><rect x="1559.86" y="1185.32" width="35.1" height="7.74" fill="#2599a8"/><rect x="1559.86" y="1170.06" width="35.1" height="15.56" fill="#2a60bf"/><rect x="1559.86" y="1166.77" width="35.1" height="3.60" fill="#8fb038"/><rect x="1559.86" y="1157.00" width="35.1" height="10.06" fill="#e01f26"/><rect x="1559.86" y="1152.73" width="35.1" height="4.57" fill="#3aae48"/><rect x="1559.86" y="1151.15" width="35.1" height="1.89" fill="#6ca844"/><rect x="1559.86" y="1148.46" width="35.1" height="2.98" fill="#d9480f"/><rect x="1559.86" y="1145.41" width="35.1" height="3.35" fill="#25a878"/><rect x="1559.86" y="1141.14" width="35.1" height="4.57" fill="#a33db0"/><rect x="1559.86" y="1138.33" width="35.1" height="3.11" fill="#4b2acc"/><rect x="1559.86" y="1136.87" width="35.1" height="1.76" fill="#2bc02b"/><rect x="1559.86" y="1135.04" width="35.1" height="2.13" fill="#9ca2ae"/><rect x="1559.86" y="1229.27" width="35.1" height="0.7" fill="#fff" opacity=".28"/><rect x="1559.86" y="1212.18" width="35.1" height="0.7" fill="#fff" opacity=".28"/><rect x="1559.86" y="1199.37" width="35.1" height="0.7" fill="#fff" opacity=".28"/><rect x="1559.86" y="1192.41" width="35.1" height="0.7" fill="#fff" opacity=".28"/><rect x="1559.86" y="1184.97" width="35.1" height="0.7" fill="#fff" opacity=".28"/><rect x="1559.86" y="1169.71" width="35.1" height="0.7" fill="#fff" opacity=".28"/><rect x="1559.86" y="1166.42" width="35.1" height="0.7" fill="#fff" opacity=".28"/><rect x="1559.86" y="1156.65" width="35.1" height="0.7" fill="#fff" opacity=".28"/><rect x="1559.86" y="1152.38" width="35.1" height="0.7" fill="#fff" opacity=".28"/><rect x="1559.86" y="1150.80" width="35.1" height="0.7" fill="#fff" opacity=".28"/><rect x="1559.86" y="1148.11" width="35.1" height="0.7" fill="#fff" opacity=".28"/><rect x="1559.86" y="1145.06" width="35.1" height="0.7" fill="#fff" opacity=".28"/><rect x="1559.86" y="1140.79" width="35.1" height="0.7" fill="#fff" opacity=".28"/><rect x="1559.86" y="1137.98" width="35.1" height="0.7" fill="#fff" opacity=".28"/><rect x="1559.86" y="1136.52" width="35.1" height="0.7" fill="#fff" opacity=".28"/></g>
<line x1="258" y1="1243.9" x2="1599" y2="1243.9" stroke="#a3a3a8" stroke-width="1.6"/>
<text x="249.5" y="970" text-anchor="end" font-family="Liberation Mono" font-size="10" fill="#50545b" stroke="#50545b" stroke-width="0.25">200</text>
<text x="249.5" y="1034" text-anchor="end" font-family="Liberation Mono" font-size="10" fill="#50545b" stroke="#50545b" stroke-width="0.25">150</text>
<text x="249.5" y="1105.3" text-anchor="end" font-family="Liberation Mono" font-size="10" fill="#50545b" stroke="#50545b" stroke-width="0.25">100</text>
<text x="249.5" y="1176.6" text-anchor="end" font-family="Liberation Mono" font-size="10" fill="#50545b" stroke="#50545b" stroke-width="0.25">50</text>
<text x="249.5" y="1248" text-anchor="end" font-family="Liberation Mono" font-size="10" fill="#50545b" stroke="#50545b" stroke-width="0.25">0</text>
<text x="414.6" y="1261.3" text-anchor="middle" font-family="Liberation Sans" font-size="12.6" fill="#6b7078">Nov 6</text>
<text x="548.8" y="1261.3" text-anchor="middle" font-family="Liberation Sans" font-size="12.6" fill="#6b7078">Nov 9</text>
<text x="683.0" y="1261.3" text-anchor="middle" font-family="Liberation Sans" font-size="12.6" fill="#6b7078">Nov 12</text>
<text x="817.2" y="1261.3" text-anchor="middle" font-family="Liberation Sans" font-size="12.6" fill="#6b7078">Nov 15</text>
<text x="951.5" y="1261.3" text-anchor="middle" font-family="Liberation Sans" font-size="12.6" fill="#6b7078">Nov 18</text>
<text x="1085.7" y="1261.3" text-anchor="middle" font-family="Liberation Sans" font-size="12.6" fill="#6b7078">Nov 21</text>
<text x="1219.9" y="1261.3" text-anchor="middle" font-family="Liberation Sans" font-size="12.6" fill="#6b7078">Nov 24</text>
<text x="1354.1" y="1261.3" text-anchor="middle" font-family="Liberation Sans" font-size="12.6" fill="#6b7078">Nov 27</text>
<text x="1488.4" y="1261.3" text-anchor="middle" font-family="Liberation Sans" font-size="12.6" fill="#6b7078">Nov 30</text>
</svg><!--/CHART-->
</div><div class="abs" style="left:0;top:0;width:1534px;height:1227px;border-radius:10px;border:1px solid rgba(255,255,255,.16)"></div></div>
</body></html>
